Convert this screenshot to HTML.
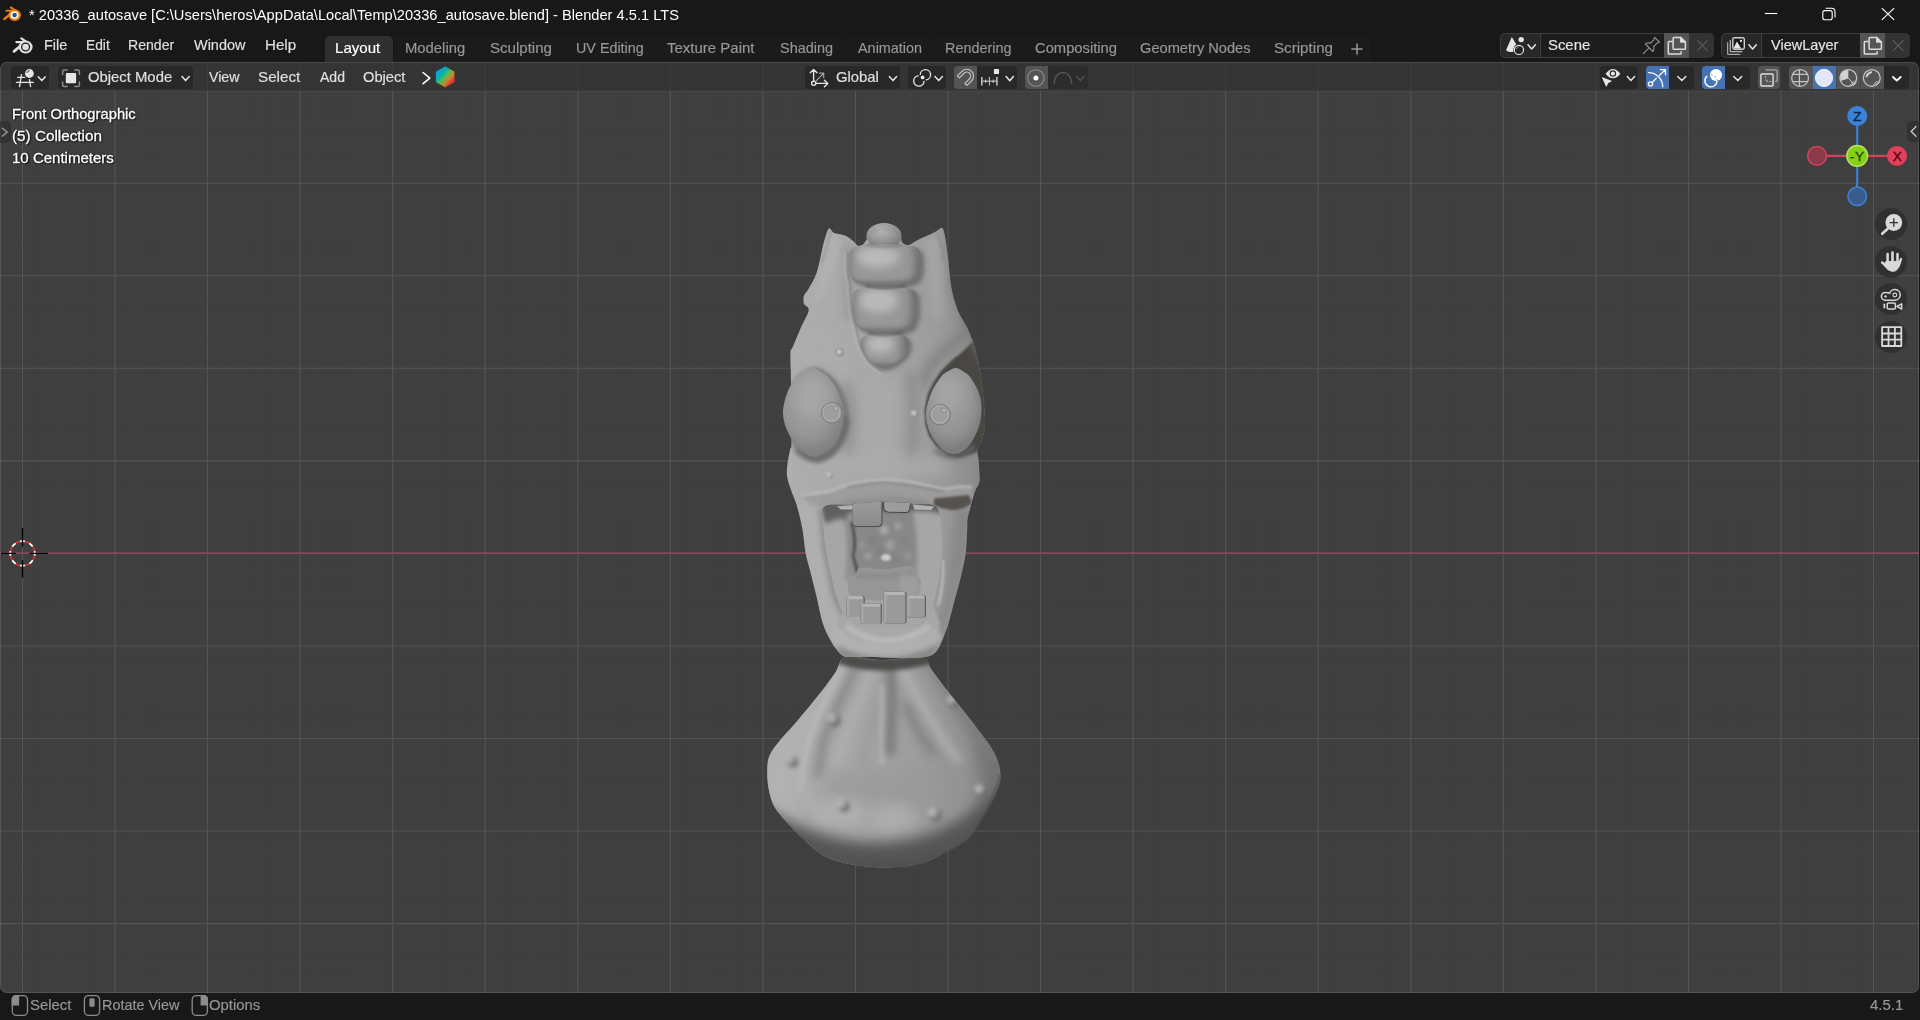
<!DOCTYPE html>
<html lang="en"><head><meta charset="utf-8"><title>Blender</title>
<style>
html,body{margin:0;padding:0;background:#181818;}
body{width:1920px;height:1020px;overflow:hidden;position:relative;font-family:"Liberation Sans",sans-serif;}
.a{position:absolute;}
.t{position:absolute;white-space:pre;line-height:20px;transform-origin:0 0;}
.btn{position:absolute;box-sizing:border-box;}
svg{position:absolute;overflow:visible;}
</style></head><body>

<div class="a" id="viewport" style="left:0px;top:62px;width:1919px;height:931px;background:#3f3f3f;border-radius:7px;overflow:hidden;">
<svg class="a" style="left:0;top:0" width="1919" height="931" viewBox="0 0 1919 931"><path d="M3.99 0V931M13.24 0V931M31.76 0V931M41.01 0V931M50.27 0V931M59.52 0V931M68.78 0V931M78.03 0V931M87.29 0V931M96.54 0V931M105.80 0V931M124.31 0V931M133.56 0V931M142.81 0V931M152.07 0V931M161.33 0V931M170.58 0V931M179.84 0V931M189.09 0V931M198.35 0V931M216.86 0V931M226.11 0V931M235.37 0V931M244.62 0V931M253.88 0V931M263.13 0V931M272.38 0V931M281.64 0V931M290.90 0V931M309.41 0V931M318.66 0V931M327.92 0V931M337.17 0V931M346.43 0V931M355.68 0V931M364.94 0V931M374.19 0V931M383.45 0V931M401.96 0V931M411.21 0V931M420.47 0V931M429.72 0V931M438.98 0V931M448.23 0V931M457.49 0V931M466.74 0V931M476.00 0V931M494.51 0V931M503.76 0V931M513.02 0V931M522.27 0V931M531.53 0V931M540.78 0V931M550.04 0V931M559.29 0V931M568.55 0V931M587.06 0V931M596.31 0V931M605.57 0V931M614.82 0V931M624.08 0V931M633.33 0V931M642.59 0V931M651.84 0V931M661.10 0V931M679.61 0V931M688.86 0V931M698.12 0V931M707.37 0V931M716.63 0V931M725.88 0V931M735.14 0V931M744.39 0V931M753.65 0V931M772.16 0V931M781.41 0V931M790.67 0V931M799.92 0V931M809.18 0V931M818.43 0V931M827.69 0V931M836.94 0V931M846.20 0V931M864.71 0V931M873.96 0V931M883.22 0V931M892.47 0V931M901.73 0V931M910.98 0V931M920.24 0V931M929.49 0V931M938.75 0V931M957.26 0V931M966.51 0V931M975.77 0V931M985.02 0V931M994.28 0V931M1003.53 0V931M1012.79 0V931M1022.04 0V931M1031.30 0V931M1049.81 0V931M1059.06 0V931M1068.32 0V931M1077.57 0V931M1086.83 0V931M1096.08 0V931M1105.34 0V931M1114.59 0V931M1123.85 0V931M1142.36 0V931M1151.61 0V931M1160.87 0V931M1170.12 0V931M1179.38 0V931M1188.63 0V931M1197.88 0V931M1207.14 0V931M1216.40 0V931M1234.91 0V931M1244.16 0V931M1253.42 0V931M1262.67 0V931M1271.93 0V931M1281.18 0V931M1290.44 0V931M1299.69 0V931M1308.95 0V931M1327.46 0V931M1336.71 0V931M1345.97 0V931M1355.22 0V931M1364.48 0V931M1373.73 0V931M1382.99 0V931M1392.24 0V931M1401.50 0V931M1420.01 0V931M1429.26 0V931M1438.52 0V931M1447.77 0V931M1457.03 0V931M1466.28 0V931M1475.54 0V931M1484.79 0V931M1494.05 0V931M1512.56 0V931M1521.81 0V931M1531.07 0V931M1540.32 0V931M1549.58 0V931M1558.83 0V931M1568.09 0V931M1577.34 0V931M1586.60 0V931M1605.11 0V931M1614.36 0V931M1623.62 0V931M1632.87 0V931M1642.13 0V931M1651.38 0V931M1660.64 0V931M1669.89 0V931M1679.15 0V931M1697.66 0V931M1706.91 0V931M1716.17 0V931M1725.42 0V931M1734.68 0V931M1743.93 0V931M1753.19 0V931M1762.44 0V931M1771.70 0V931M1790.21 0V931M1799.46 0V931M1808.72 0V931M1817.97 0V931M1827.23 0V931M1836.48 0V931M1845.74 0V931M1854.99 0V931M1864.25 0V931M1882.76 0V931M1892.01 0V931M1901.27 0V931M1910.52 0V931M0 0.88H1919M0 10.14H1919M0 19.39H1919M0 37.90H1919M0 47.16H1919M0 56.41H1919M0 65.67H1919M0 74.92H1919M0 84.18H1919M0 93.43H1919M0 102.69H1919M0 111.94H1919M0 130.45H1919M0 139.71H1919M0 148.96H1919M0 158.22H1919M0 167.47H1919M0 176.73H1919M0 185.98H1919M0 195.24H1919M0 204.49H1919M0 223.00H1919M0 232.26H1919M0 241.51H1919M0 250.77H1919M0 260.02H1919M0 269.28H1919M0 278.53H1919M0 287.79H1919M0 297.04H1919M0 315.55H1919M0 324.81H1919M0 334.06H1919M0 343.32H1919M0 352.57H1919M0 361.83H1919M0 371.08H1919M0 380.34H1919M0 389.59H1919M0 408.10H1919M0 417.36H1919M0 426.61H1919M0 435.87H1919M0 445.12H1919M0 454.38H1919M0 463.63H1919M0 472.89H1919M0 482.14H1919M0 500.65H1919M0 509.91H1919M0 519.16H1919M0 528.42H1919M0 537.67H1919M0 546.93H1919M0 556.18H1919M0 565.44H1919M0 574.69H1919M0 593.20H1919M0 602.46H1919M0 611.72H1919M0 620.97H1919M0 630.23H1919M0 639.48H1919M0 648.74H1919M0 657.99H1919M0 667.25H1919M0 685.75H1919M0 695.01H1919M0 704.26H1919M0 713.52H1919M0 722.77H1919M0 732.03H1919M0 741.28H1919M0 750.54H1919M0 759.80H1919M0 778.31H1919M0 787.56H1919M0 796.82H1919M0 806.07H1919M0 815.33H1919M0 824.58H1919M0 833.84H1919M0 843.09H1919M0 852.35H1919M0 870.86H1919M0 880.11H1919M0 889.37H1919M0 898.62H1919M0 907.88H1919M0 917.13H1919M0 926.38H1919" stroke="#434343" stroke-width="0.9" fill="none"/><path d="M22.50 0V931M115.05 0V931M207.60 0V931M300.15 0V931M392.70 0V931M485.25 0V931M577.80 0V931M670.35 0V931M762.90 0V931M855.45 0V931M948.00 0V931M1040.55 0V931M1133.10 0V931M1225.65 0V931M1318.20 0V931M1410.75 0V931M1503.30 0V931M1595.85 0V931M1688.40 0V931M1780.95 0V931M1873.50 0V931M0 28.65H1919M0 121.20H1919M0 213.75H1919M0 306.30H1919M0 398.85H1919M0 583.95H1919M0 676.50H1919M0 769.05H1919M0 861.60H1919" stroke="#555555" stroke-width="1.1" fill="none"/><path d="M0 491.15H1919" stroke="#874859" stroke-width="1.75" fill="none"/></svg>
<svg class="a" style="left:0;top:0" width="1919" height="931" viewBox="0 62 1919 931"><defs>
<filter id="b2" filterUnits="userSpaceOnUse" x="730" y="200" width="300" height="700"><feGaussianBlur stdDeviation="2"/></filter>
<filter id="b4" filterUnits="userSpaceOnUse" x="730" y="200" width="300" height="700"><feGaussianBlur stdDeviation="4"/></filter>
<filter id="b7" filterUnits="userSpaceOnUse" x="730" y="200" width="300" height="700"><feGaussianBlur stdDeviation="7"/></filter>
<filter id="b12" filterUnits="userSpaceOnUse" x="730" y="200" width="300" height="700"><feGaussianBlur stdDeviation="12"/></filter>
<filter id="b1" filterUnits="userSpaceOnUse" x="730" y="200" width="300" height="700"><feGaussianBlur stdDeviation="1"/></filter>
<linearGradient id="gHead" x1="0" y1="0" x2="1" y2="0"><stop offset="0" stop-color="#aeaeae"/><stop offset="0.45" stop-color="#a8a8a8"/><stop offset="0.8" stop-color="#999999"/><stop offset="1" stop-color="#878787"/></linearGradient>
<linearGradient id="gBody" x1="0" y1="0" x2="1" y2="0"><stop offset="0" stop-color="#b0b0b0"/><stop offset="0.5" stop-color="#a3a3a3"/><stop offset="0.85" stop-color="#929292"/><stop offset="1" stop-color="#7c7c7c"/></linearGradient>
<radialGradient id="gEyeL" cx="0.42" cy="0.34" r="0.75"><stop offset="0" stop-color="#a6a6a6"/><stop offset="0.55" stop-color="#969696"/><stop offset="1" stop-color="#7a7a7a"/></radialGradient>
<radialGradient id="gEyeR" cx="0.42" cy="0.34" r="0.75"><stop offset="0" stop-color="#a4a4a4"/><stop offset="0.55" stop-color="#949494"/><stop offset="1" stop-color="#767676"/></radialGradient>
<radialGradient id="gSeg" cx="0.42" cy="0.3" r="0.8"><stop offset="0" stop-color="#b4b4b4"/><stop offset="0.45" stop-color="#999999"/><stop offset="1" stop-color="#6e6e6e"/></radialGradient>
<linearGradient id="gTooth" x1="0" y1="0" x2="0" y2="1"><stop offset="0" stop-color="#9a9a9a"/><stop offset="1" stop-color="#8a8a8a"/></linearGradient>
<clipPath id="cHead"><path d="M829.2 228.2C830.5 227.8 831.9 231.7 833.7 232.7C835.5 233.7 837.9 233.8 839.9 234.3C841.9 234.9 843.8 234.9 846.0 236.0C848.2 237.1 851.2 239.4 853.1 241.0C855.0 242.6 856.2 244.9 857.6 245.6C859.0 246.3 860.1 246.1 861.5 245.3C862.9 244.5 864.5 243.1 866.0 240.7C867.5 238.3 868.8 233.6 870.5 231.0C872.2 228.4 874.2 226.5 876.5 225.2C878.8 223.9 881.6 223.2 884.0 223.2C886.4 223.2 888.8 223.9 891.0 225.0C893.2 226.1 895.6 228.0 897.2 230.0C898.8 232.0 900.0 235.0 900.8 237.0C901.6 239.0 901.1 240.7 902.0 242.0C902.9 243.3 905.0 244.6 906.3 245.0C907.6 245.4 908.4 245.3 910.0 244.6C911.6 243.9 913.7 242.2 916.0 241.0C918.3 239.8 920.9 238.5 924.0 237.1C927.1 235.7 931.6 233.9 934.6 232.3C937.6 230.8 940.1 227.9 941.7 227.8C943.3 227.8 943.4 230.0 944.0 232.0C944.6 234.0 944.9 235.0 945.6 240.0C946.3 245.0 947.4 253.7 948.4 261.8C949.4 269.9 949.9 280.4 951.5 288.5C953.1 296.6 955.2 303.9 957.8 310.4C960.4 316.9 964.6 322.2 967.2 327.7C969.8 333.2 971.9 338.8 973.5 343.4C975.1 347.9 975.7 351.3 976.6 355.0C977.5 358.7 978.1 360.7 979.0 365.7C979.9 370.7 981.2 378.4 982.0 385.0C982.8 391.6 983.5 398.3 984.0 405.0C984.5 411.7 985.3 419.2 985.0 425.0C984.7 430.8 983.2 435.9 982.0 440.0C980.8 444.1 978.1 446.3 977.5 449.5C976.9 452.7 978.1 454.8 978.5 459.0C978.9 463.2 979.5 470.9 979.6 475.0C979.7 479.1 979.8 480.7 979.0 483.4C978.2 486.1 976.4 487.3 975.0 491.2C973.6 495.1 971.7 502.2 970.4 507.0C969.1 511.8 967.9 516.3 967.4 520.0C966.9 523.7 967.5 523.7 967.2 529.2C966.9 534.7 966.7 544.9 965.7 552.8C964.7 560.6 962.8 568.5 961.0 576.3C959.2 584.1 956.8 591.9 954.7 599.8C952.6 607.6 950.5 616.6 948.4 623.4C946.3 630.2 943.9 636.2 942.1 640.6C940.3 645.0 939.2 647.5 937.4 650.0C935.5 652.5 933.9 654.2 931.0 655.5C928.1 656.8 925.2 657.1 920.0 657.5C914.8 657.9 907.3 657.9 900.0 657.8C892.7 657.7 883.5 657.1 876.0 657.0C868.5 656.9 860.5 657.2 855.0 657.0C849.5 656.8 846.3 657.1 843.3 655.9C840.3 654.7 839.1 652.5 837.0 650.0C834.9 647.5 833.1 645.0 830.7 640.6C828.4 636.2 825.2 630.7 822.9 623.4C820.5 616.1 818.7 605.3 816.6 596.7C814.5 588.1 812.1 578.9 810.3 571.6C808.5 564.3 806.9 559.9 805.6 552.8C804.3 545.7 803.9 537.0 802.5 529.2C801.1 521.4 798.9 512.5 797.0 506.0C795.1 499.5 792.7 495.0 791.0 490.0C789.3 485.0 787.6 480.5 787.0 476.0C786.4 471.5 787.1 467.3 787.6 463.0C788.1 458.7 789.4 453.2 790.0 450.0C790.6 446.8 791.3 450.3 791.5 444.0C791.7 437.7 791.1 422.5 791.0 412.0C790.9 401.5 791.0 388.2 791.0 381.0C791.0 373.8 790.8 373.6 790.7 368.8C790.6 364.0 790.1 355.7 790.5 352.0C790.9 348.3 791.3 350.6 793.0 346.5C794.7 342.4 798.3 333.7 800.9 327.7C803.5 321.7 808.1 314.3 808.7 310.4C809.3 306.5 805.2 306.4 804.3 304.5C803.4 302.6 803.5 300.7 803.5 299.0C803.5 297.3 803.6 296.2 804.5 294.5C805.4 292.8 806.7 292.1 808.7 288.5C810.7 284.9 814.2 279.9 816.6 272.8C819.0 265.7 821.3 252.3 822.9 246.0C824.5 239.7 825.0 238.0 826.0 235.0C827.0 232.0 827.9 228.6 829.2 228.2Z"/></clipPath><clipPath id="cBody"><path d="M846.0 657.0C853.4 654.9 867.3 659.9 880.0 660.0C892.7 660.1 913.5 656.0 922.0 657.5C930.5 659.0 927.1 663.9 931.0 669.0C934.9 674.1 940.8 682.2 945.3 688.0C949.8 693.8 953.6 698.5 957.8 703.7C962.0 708.9 966.7 714.7 970.4 719.4C974.1 724.1 976.7 727.8 979.8 732.0C982.9 736.2 986.3 740.0 989.2 744.5C992.1 749.0 995.2 754.2 997.0 758.7C998.8 763.2 999.8 767.2 1000.2 771.2C1000.6 775.2 1000.7 778.7 999.6 783.0C998.5 787.3 996.9 791.2 993.9 797.0C990.9 802.8 985.8 810.7 981.4 817.5C977.0 824.3 973.0 832.4 967.2 837.9C961.4 843.4 952.8 846.8 946.8 850.4C940.8 854.0 937.5 857.2 931.0 859.8C924.5 862.4 916.7 864.8 907.6 866.0C898.5 867.2 886.7 867.7 876.2 867.2C865.7 866.7 853.7 865.0 844.8 863.0C835.9 861.0 829.7 858.9 822.9 855.0C816.1 851.1 810.0 844.9 804.0 839.4C798.0 833.9 791.8 827.7 786.8 822.2C781.8 816.7 777.2 812.0 774.2 806.5C771.2 801.0 769.9 795.1 768.7 789.2C767.5 783.3 767.1 776.8 767.2 771.2C767.3 765.6 767.3 760.7 769.5 755.5C771.7 750.3 776.3 745.0 780.5 739.8C784.7 734.5 789.6 729.8 794.6 724.0C799.6 718.2 805.6 711.0 810.3 705.3C815.0 699.6 818.7 695.1 822.9 689.6C827.1 684.1 831.5 677.8 835.4 672.4C839.2 667.0 838.6 659.1 846.0 657.0Z"/></clipPath><clipPath id="cMouth"><path d="M823.8 506.9C828.2 503.0 840.2 505.4 850.0 504.5C859.8 503.6 872.5 501.6 882.8 501.4C893.1 501.2 903.1 502.6 912.0 503.5C920.9 504.4 931.1 502.1 936.0 506.5C940.9 510.9 940.4 522.8 941.5 530.0C942.6 537.2 942.4 544.7 942.4 550.0C942.4 555.3 942.0 555.9 941.2 561.8C940.4 567.7 939.2 577.5 937.6 585.3C936.0 593.1 934.5 602.5 931.8 608.8C929.1 615.1 926.9 619.8 921.2 622.9C915.5 626.0 905.5 626.6 897.6 627.6C889.8 628.6 881.6 629.4 874.1 628.8C866.6 628.2 858.0 626.6 852.9 624.1C847.8 621.6 846.2 618.0 843.5 613.5C840.8 609.0 838.6 603.7 836.5 597.0C834.4 590.3 832.4 581.3 830.6 573.5C828.8 565.7 827.1 557.6 825.9 550.0C824.7 542.4 823.9 535.2 823.5 528.0C823.1 520.8 819.4 510.8 823.8 506.9Z"/></clipPath></defs><path d="M846.0 657.0C853.4 654.9 867.3 659.9 880.0 660.0C892.7 660.1 913.5 656.0 922.0 657.5C930.5 659.0 927.1 663.9 931.0 669.0C934.9 674.1 940.8 682.2 945.3 688.0C949.8 693.8 953.6 698.5 957.8 703.7C962.0 708.9 966.7 714.7 970.4 719.4C974.1 724.1 976.7 727.8 979.8 732.0C982.9 736.2 986.3 740.0 989.2 744.5C992.1 749.0 995.2 754.2 997.0 758.7C998.8 763.2 999.8 767.2 1000.2 771.2C1000.6 775.2 1000.7 778.7 999.6 783.0C998.5 787.3 996.9 791.2 993.9 797.0C990.9 802.8 985.8 810.7 981.4 817.5C977.0 824.3 973.0 832.4 967.2 837.9C961.4 843.4 952.8 846.8 946.8 850.4C940.8 854.0 937.5 857.2 931.0 859.8C924.5 862.4 916.7 864.8 907.6 866.0C898.5 867.2 886.7 867.7 876.2 867.2C865.7 866.7 853.7 865.0 844.8 863.0C835.9 861.0 829.7 858.9 822.9 855.0C816.1 851.1 810.0 844.9 804.0 839.4C798.0 833.9 791.8 827.7 786.8 822.2C781.8 816.7 777.2 812.0 774.2 806.5C771.2 801.0 769.9 795.1 768.7 789.2C767.5 783.3 767.1 776.8 767.2 771.2C767.3 765.6 767.3 760.7 769.5 755.5C771.7 750.3 776.3 745.0 780.5 739.8C784.7 734.5 789.6 729.8 794.6 724.0C799.6 718.2 805.6 711.0 810.3 705.3C815.0 699.6 818.7 695.1 822.9 689.6C827.1 684.1 831.5 677.8 835.4 672.4C839.2 667.0 838.6 659.1 846.0 657.0Z" fill="url(#gBody)"/><g clip-path="url(#cBody)"><path d="M935 660 L1010 750 L1010 840 L950 880 L985 790 L975 740 Z" fill="#707070" filter="url(#b7)" opacity="0.75"/><path d="M846 658 L812 700 L770 752 L764 790 L790 830 L800 780 L812 736 L840 690 L856 664Z" fill="#b4b4b4" filter="url(#b7)" opacity="0.7"/><path d="M844.8 661.4 L816.6 717.9 L804 760 L800 790" stroke="#bababa" stroke-width="5" fill="none" filter="url(#b2)" opacity="0.8" stroke-linecap="round"/><path d="M855 668 L838 705 L823 742 L818 775" stroke="#808080" stroke-width="7" fill="none" filter="url(#b4)" opacity="0.9" stroke-linecap="round"/><path d="M873 668 L858 705 L845 740 L837 765" stroke="#b4b4b4" stroke-width="6" fill="none" filter="url(#b4)" opacity="0.8" stroke-linecap="round"/><path d="M878 700 L868 740 L862 765" stroke="#8e8e8e" stroke-width="5" fill="none" filter="url(#b4)" opacity="0.6" stroke-linecap="round"/><path d="M883 686 L882.5 730 L882.5 763" stroke="#bcbcbc" stroke-width="4.5" fill="none" filter="url(#b2)" opacity="0.85" stroke-linecap="round"/><path d="M890 662 L892 700 L890 752" stroke="#727272" stroke-width="9" fill="none" filter="url(#b4)" opacity="0.9" stroke-linecap="round"/><path d="M902 668 L922 705 L942 738 L958 760" stroke="#b6b6b6" stroke-width="8" fill="none" filter="url(#b4)" opacity="0.8" stroke-linecap="round"/><path d="M906 706 L918 732 L932 752" stroke="#7c7c7c" stroke-width="7" fill="none" filter="url(#b4)" opacity="0.85" stroke-linecap="round"/><path d="M928 664 L960 712 L992 758" stroke="#808080" stroke-width="9" fill="none" filter="url(#b4)" opacity="0.7" stroke-linecap="round"/><ellipse cx="882" cy="788" rx="62" ry="20" fill="#9a9a9a" filter="url(#b7)" opacity="0.7"/><ellipse cx="842" cy="812" rx="26" ry="13" fill="#b2b2b2" filter="url(#b7)" opacity="0.8"/><ellipse cx="893" cy="818" rx="24" ry="14" fill="#b0b0b0" filter="url(#b7)" opacity="0.8"/><path d="M800 770 Q802 800 830 830" stroke="#b4b4b4" stroke-width="6" fill="none" filter="url(#b4)" opacity="0.6"/><path d="M760 806 Q830 846 884 842 Q950 840 1005 784 L1010 885 L760 885Z" fill="#545454" filter="url(#b7)"/><path d="M830 864 Q885 872 940 858 L960 880 L820 880Z" fill="#4a4a4a" filter="url(#b4)" opacity="0.8"/><path d="M838 650 Q884 666 932 650 L934 663 Q884 678 838 664Z" fill="#484644" filter="url(#b2)" opacity="0.95"/><circle cx="792.9" cy="762.2" r="5.4" fill="#6c6c6c" filter="url(#b2)" opacity="0.8"/><circle cx="789.5" cy="759" r="4.59" fill="#bcbcbc" filter="url(#b2)" opacity="0.8"/><circle cx="935.9" cy="815.7" r="6" fill="#6c6c6c" filter="url(#b2)" opacity="0.8"/><circle cx="932.5" cy="812.5" r="5.1" fill="#bcbcbc" filter="url(#b2)" opacity="0.8"/><circle cx="844.4" cy="806.7" r="5.6" fill="#6c6c6c" filter="url(#b2)" opacity="0.8"/><circle cx="841" cy="803.5" r="4.76" fill="#bcbcbc" filter="url(#b2)" opacity="0.8"/><circle cx="834.9" cy="721.0" r="6" fill="#6c6c6c" filter="url(#b2)" opacity="0.8"/><circle cx="831.5" cy="717.8" r="5.1" fill="#bcbcbc" filter="url(#b2)" opacity="0.8"/><circle cx="954.4" cy="703.0" r="5" fill="#6c6c6c" filter="url(#b2)" opacity="0.8"/><circle cx="951" cy="699.8" r="4.25" fill="#bcbcbc" filter="url(#b2)" opacity="0.8"/><circle cx="982.4" cy="792.2" r="5.6" fill="#6c6c6c" filter="url(#b2)" opacity="0.8"/><circle cx="979" cy="789" r="4.76" fill="#bcbcbc" filter="url(#b2)" opacity="0.8"/></g><path d="M1000 775 Q996 800 968 838 Q945 855 905 866.5" stroke="#55524f" stroke-width="2.2" fill="none" filter="url(#b1)" opacity="0.9"/><path d="M829.2 228.2C830.5 227.8 831.9 231.7 833.7 232.7C835.5 233.7 837.9 233.8 839.9 234.3C841.9 234.9 843.8 234.9 846.0 236.0C848.2 237.1 851.2 239.4 853.1 241.0C855.0 242.6 856.2 244.9 857.6 245.6C859.0 246.3 860.1 246.1 861.5 245.3C862.9 244.5 864.5 243.1 866.0 240.7C867.5 238.3 868.8 233.6 870.5 231.0C872.2 228.4 874.2 226.5 876.5 225.2C878.8 223.9 881.6 223.2 884.0 223.2C886.4 223.2 888.8 223.9 891.0 225.0C893.2 226.1 895.6 228.0 897.2 230.0C898.8 232.0 900.0 235.0 900.8 237.0C901.6 239.0 901.1 240.7 902.0 242.0C902.9 243.3 905.0 244.6 906.3 245.0C907.6 245.4 908.4 245.3 910.0 244.6C911.6 243.9 913.7 242.2 916.0 241.0C918.3 239.8 920.9 238.5 924.0 237.1C927.1 235.7 931.6 233.9 934.6 232.3C937.6 230.8 940.1 227.9 941.7 227.8C943.3 227.8 943.4 230.0 944.0 232.0C944.6 234.0 944.9 235.0 945.6 240.0C946.3 245.0 947.4 253.7 948.4 261.8C949.4 269.9 949.9 280.4 951.5 288.5C953.1 296.6 955.2 303.9 957.8 310.4C960.4 316.9 964.6 322.2 967.2 327.7C969.8 333.2 971.9 338.8 973.5 343.4C975.1 347.9 975.7 351.3 976.6 355.0C977.5 358.7 978.1 360.7 979.0 365.7C979.9 370.7 981.2 378.4 982.0 385.0C982.8 391.6 983.5 398.3 984.0 405.0C984.5 411.7 985.3 419.2 985.0 425.0C984.7 430.8 983.2 435.9 982.0 440.0C980.8 444.1 978.1 446.3 977.5 449.5C976.9 452.7 978.1 454.8 978.5 459.0C978.9 463.2 979.5 470.9 979.6 475.0C979.7 479.1 979.8 480.7 979.0 483.4C978.2 486.1 976.4 487.3 975.0 491.2C973.6 495.1 971.7 502.2 970.4 507.0C969.1 511.8 967.9 516.3 967.4 520.0C966.9 523.7 967.5 523.7 967.2 529.2C966.9 534.7 966.7 544.9 965.7 552.8C964.7 560.6 962.8 568.5 961.0 576.3C959.2 584.1 956.8 591.9 954.7 599.8C952.6 607.6 950.5 616.6 948.4 623.4C946.3 630.2 943.9 636.2 942.1 640.6C940.3 645.0 939.2 647.5 937.4 650.0C935.5 652.5 933.9 654.2 931.0 655.5C928.1 656.8 925.2 657.1 920.0 657.5C914.8 657.9 907.3 657.9 900.0 657.8C892.7 657.7 883.5 657.1 876.0 657.0C868.5 656.9 860.5 657.2 855.0 657.0C849.5 656.8 846.3 657.1 843.3 655.9C840.3 654.7 839.1 652.5 837.0 650.0C834.9 647.5 833.1 645.0 830.7 640.6C828.4 636.2 825.2 630.7 822.9 623.4C820.5 616.1 818.7 605.3 816.6 596.7C814.5 588.1 812.1 578.9 810.3 571.6C808.5 564.3 806.9 559.9 805.6 552.8C804.3 545.7 803.9 537.0 802.5 529.2C801.1 521.4 798.9 512.5 797.0 506.0C795.1 499.5 792.7 495.0 791.0 490.0C789.3 485.0 787.6 480.5 787.0 476.0C786.4 471.5 787.1 467.3 787.6 463.0C788.1 458.7 789.4 453.2 790.0 450.0C790.6 446.8 791.3 450.3 791.5 444.0C791.7 437.7 791.1 422.5 791.0 412.0C790.9 401.5 791.0 388.2 791.0 381.0C791.0 373.8 790.8 373.6 790.7 368.8C790.6 364.0 790.1 355.7 790.5 352.0C790.9 348.3 791.3 350.6 793.0 346.5C794.7 342.4 798.3 333.7 800.9 327.7C803.5 321.7 808.1 314.3 808.7 310.4C809.3 306.5 805.2 306.4 804.3 304.5C803.4 302.6 803.5 300.7 803.5 299.0C803.5 297.3 803.6 296.2 804.5 294.5C805.4 292.8 806.7 292.1 808.7 288.5C810.7 284.9 814.2 279.9 816.6 272.8C819.0 265.7 821.3 252.3 822.9 246.0C824.5 239.7 825.0 238.0 826.0 235.0C827.0 232.0 827.9 228.6 829.2 228.2Z" fill="url(#gHead)"/><g clip-path="url(#cHead)"><path d="M973 341 L962.7 351.4 L951 360.8 L940.8 371 L932.9 382.7 L927.5 394.5 L924.5 410 L925.5 425 L929 436 L937 447 L948 456 L958 458 L975 453 L990 440 L992 400 L990 360 L985 340Z" fill="#4a4643" filter="url(#b1)"/><path d="M975 330 L960 346 L946 358 L934 372 L926 390 L918 380 L930 356 L950 338 L968 322Z" fill="#828282" filter="url(#b4)" opacity="0.8"/><path d="M944 228 L950 290 L960 320 L985 370 L990 228Z" fill="#7a7876" filter="url(#b4)" opacity="0.7"/><path d="M792 350 Q800 362 830 366 Q850 372 858 400 L850 360 L830 330 L800 330Z" fill="#adadad" filter="url(#b4)" opacity="0.7"/><path d="M868 380 Q875 430 858 470 L900 470 Q892 420 900 380Z" fill="#ababab" filter="url(#b7)" opacity="0.8"/><path d="M850 380 Q862 420 850 460 L842 455 Q852 420 842 385Z" fill="#8a8a8a" filter="url(#b4)" opacity="0.7"/><path d="M905 372 Q912 420 905 462 L915 462 Q922 420 915 372Z" fill="#888888" filter="url(#b4)" opacity="0.7"/><path d="M830 232 Q822 270 812 300 L822 300 Q836 268 842 240Z" fill="#b2b2b2" filter="url(#b2)" opacity="0.7"/><path d="M846 242 Q842 280 846 320 L856 320 Q850 280 854 246Z" fill="#8c8c8c" filter="url(#b4)" opacity="0.6"/><path d="M925 238 Q930 280 932 320 L942 320 Q944 270 940 232Z" fill="#aaaaaa" filter="url(#b4)" opacity="0.6"/><path d="M831 231 Q828 245 822 262" stroke="#8a8a8a" stroke-width="1.2" fill="none" filter="url(#b1)" opacity="0.7"/><path d="M937 232 Q942 246 944.5 262" stroke="#7a7a7a" stroke-width="1.2" fill="none" filter="url(#b1)" opacity="0.7"/><ellipse cx="880" cy="466" rx="72" ry="13" fill="#acacac" filter="url(#b7)" opacity="0.75"/><path d="M800.0 497.0C801.2 496.8 802.4 496.6 807.3 495.9C812.2 495.2 822.5 494.3 829.2 492.7C836.0 491.1 841.4 487.8 847.8 486.1C854.2 484.4 861.5 483.1 867.5 482.3C873.5 481.5 877.5 481.1 883.9 481.2C890.3 481.3 898.5 481.8 905.8 482.8C913.1 483.8 921.3 485.9 927.7 487.2C934.1 488.5 938.5 490.3 944.0 490.5C949.5 490.7 955.8 488.6 960.5 488.3C965.2 488.1 970.1 488.9 972.0 489.0 L975 512 L940 509 L882.8 501.4 L823.8 506.9 L810 506 L804 498Z" fill="#9c9c9c" filter="url(#b1)" opacity="0.9"/><path d="M850 500 Q884 494 925 500 L936 508 L882.8 502 L823.8 508Z" fill="#8a8a8a" filter="url(#b2)" opacity="0.8"/><path d="M800.0 497.0C801.2 496.8 802.4 496.6 807.3 495.9C812.2 495.2 822.5 494.3 829.2 492.7C836.0 491.1 841.4 487.8 847.8 486.1C854.2 484.4 861.5 483.1 867.5 482.3C873.5 481.5 877.5 481.1 883.9 481.2C890.3 481.3 898.5 481.8 905.8 482.8C913.1 483.8 921.3 485.9 927.7 487.2C934.1 488.5 938.5 490.3 944.0 490.5C949.5 490.7 955.8 488.6 960.5 488.3C965.2 488.1 970.1 488.9 972.0 489.0" stroke="#b6b6b6" stroke-width="3.2" fill="none" filter="url(#b1)" opacity="0.9" transform="translate(0 -1.6)"/><path d="M847.8 487.4 Q867.5 483.6 883.9 482.5 Q905.8 484 927.7 488.4 L944 491.6" stroke="#7e7e7e" stroke-width="1.1" fill="none" filter="url(#b1)" opacity="0.9"/><path d="M794 500 L806 556 L822 622 L842 656 L852 650 L834 604 L822 540 L818 505Z" fill="#b0b0b0" filter="url(#b4)" opacity="0.75"/><path d="M818 508 L822 550 L832 598 L846 624 L852 620 L838 590 L828 540 L826 508Z" fill="#888888" filter="url(#b2)" opacity="0.75"/><path d="M972 500 L966 556 L952 612 L934 652 L926 648 L944 600 L952 540 L956 505Z" fill="#858585" filter="url(#b4)" opacity="0.75"/><path d="M943 560 Q944 585 938 606" stroke="#bcbcbc" stroke-width="2.6" fill="none" filter="url(#b1)" opacity="0.9"/><path d="M934 498.5 Q950 496.5 969 495 L972 503 Q962 511 950 509.8 Q940 508.6 934 505Z" fill="#55504b" filter="url(#b1)" opacity="0.95"/><path d="M834 616 Q850 640 885 642 Q922 640 936 616 L942 640 Q920 660 885 660 Q850 660 830 640Z" fill="#b2b2b2" filter="url(#b2)" opacity="0.9"/><path d="M838 646 Q860 656 885 657 Q912 656 934 646 L934 660 L838 660Z" fill="#868686" filter="url(#b2)" opacity="0.8"/></g><path d="M823.8 506.9C828.2 503.0 840.2 505.4 850.0 504.5C859.8 503.6 872.5 501.6 882.8 501.4C893.1 501.2 903.1 502.6 912.0 503.5C920.9 504.4 931.1 502.1 936.0 506.5C940.9 510.9 940.4 522.8 941.5 530.0C942.6 537.2 942.4 544.7 942.4 550.0C942.4 555.3 942.0 555.9 941.2 561.8C940.4 567.7 939.2 577.5 937.6 585.3C936.0 593.1 934.5 602.5 931.8 608.8C929.1 615.1 926.9 619.8 921.2 622.9C915.5 626.0 905.5 626.6 897.6 627.6C889.8 628.6 881.6 629.4 874.1 628.8C866.6 628.2 858.0 626.6 852.9 624.1C847.8 621.6 846.2 618.0 843.5 613.5C840.8 609.0 838.6 603.7 836.5 597.0C834.4 590.3 832.4 581.3 830.6 573.5C828.8 565.7 827.1 557.6 825.9 550.0C824.7 542.4 823.9 535.2 823.5 528.0C823.1 520.8 819.4 510.8 823.8 506.9Z" fill="#a6a6a6"/><g clip-path="url(#cMouth)"><path d="M856 512 L912 508 Q920 540 916 578 L852 580 Q850 545 850 515Z" fill="#888888" filter="url(#b2)"/><circle cx="884" cy="530" r="4.5" fill="#b2b2b2" filter="url(#b2)" opacity="0.8"/><circle cx="898" cy="526" r="3.5" fill="#acacac" filter="url(#b2)" opacity="0.8"/><circle cx="873" cy="540" r="3.5" fill="#7c7c7c" filter="url(#b2)" opacity="0.8"/><circle cx="890" cy="545" r="4.5" fill="#a8a8a8" filter="url(#b2)" opacity="0.8"/><circle cx="903" cy="540" r="3.5" fill="#808080" filter="url(#b2)" opacity="0.8"/><circle cx="868" cy="556" r="3.5" fill="#a8a8a8" filter="url(#b2)" opacity="0.8"/><circle cx="880" cy="552" r="3" fill="#787878" filter="url(#b2)" opacity="0.8"/><circle cx="908" cy="556" r="3.5" fill="#9c9c9c" filter="url(#b2)" opacity="0.8"/><circle cx="876" cy="522" r="3.5" fill="#828282" filter="url(#b2)" opacity="0.8"/><circle cx="896" cy="560" r="3" fill="#7e7e7e" filter="url(#b2)" opacity="0.8"/><circle cx="862" cy="545" r="3" fill="#9e9e9e" filter="url(#b2)" opacity="0.8"/><ellipse cx="886" cy="557.5" rx="5" ry="3.6" fill="#d2d2d2" filter="url(#b1)" opacity="0.9"/><path d="M851 522 Q857 540 853 556 Q856 566 858 574" stroke="#4c4c4c" stroke-width="3" fill="none" filter="url(#b1)" opacity="0.9"/><path d="M846 515 Q852 545 848 580" stroke="#7a7a7a" stroke-width="4" fill="none" filter="url(#b2)" opacity="0.7"/><path d="M820 502 L940 502 L942 514 Q930 510 912 511 L854 512 Q835 513 826 522Z" fill="#5a5a5a" filter="url(#b2)" opacity="0.95"/><path d="M824 506 L850 508 L846 520 Q835 518 826 524Z" fill="#606060" filter="url(#b2)" opacity="0.8"/><path d="M855.3 574.7C857.1 573.1 856.1 568.5 861.2 567.6C866.3 566.7 877.5 569.4 885.9 569.2C894.3 569.0 906.9 565.6 911.8 566.5C916.7 567.4 913.8 572.6 915.3 574.7C916.8 576.9 919.8 577.0 920.6 579.4C921.4 581.8 920.7 586.0 920.0 588.8C919.3 591.6 919.8 594.1 916.5 596.0C913.2 597.9 907.8 599.3 900.0 600.0C892.2 600.7 878.2 600.7 870.0 600.0C861.8 599.3 854.2 598.8 850.6 596.0C847.0 593.2 848.2 586.2 848.2 583.0C848.2 579.8 849.4 578.4 850.6 577.0C851.8 575.6 853.5 576.3 855.3 574.7Z" fill="#969696"/><path d="M858 572 Q885 576 912 570 L914 576 Q885 582 856 578Z" fill="#8a8a8a" filter="url(#b1)" opacity="0.7"/><path d="M900 572 L918 578 L918 596 L900 598Z" fill="#a2a2a2" filter="url(#b2)" opacity="0.7"/></g><path d="M836.9 506.3 L853.3 505 L853.3 509.6 L841 509.4Z" fill="#b2b2b2"/><path d="M912.9 504.6 L934.2 506.4 L931 510 L914.5 509.4Z" fill="#b2b2b2"/><path d="M852.7 503.5 L882.3 501.6 V523 Q882.3 526.6 878.6 526.8 L857 527.1 Q853 526.8 852.7 523Z" fill="#3e3e3e"/><path d="M852.7 503.5 L881.5 501.6 V522.4 Q881.5 525.8 878 526 L857 526.3 Q853 526 852.7 522.4Z" fill="url(#gTooth)"/><path d="M883.4 501.5 L910.7 503 L909.6 510.6 Q909 512.9 906 512.9 L888 512.5 Q884.4 512 883.6 509Z" fill="#3e3e3e"/><path d="M884 501.6 L910.2 503 L909 510 Q908.4 512.1 905.6 512.1 L888.4 511.8 Q885 511.4 884.3 508.6Z" fill="#9c9c9c"/><rect x="846.5" y="595.9" width="18.2" height="21.1" rx="2.2" fill="#555"/><rect x="846.5" y="595.9" width="17.2" height="21.1" rx="2.2" fill="#9a9a9a"/><rect x="846.9" y="596.1999999999999" width="16.2" height="3" rx="1.4" fill="#b6b6b6" opacity="0.95"/><rect x="846.8" y="596.9" width="2.6" height="19.1" rx="1.2" fill="#ababab" opacity="0.7"/><rect x="883.5" y="591.8" width="23.0" height="31.7" rx="2.2" fill="#555"/><rect x="883.5" y="591.8" width="22.0" height="31.7" rx="2.2" fill="#9a9a9a"/><rect x="883.9" y="592.0999999999999" width="21.0" height="3" rx="1.4" fill="#b6b6b6" opacity="0.95"/><rect x="883.8" y="592.8" width="2.6" height="29.7" rx="1.2" fill="#ababab" opacity="0.7"/><rect x="907" y="595.3" width="18.9" height="22.2" rx="2.2" fill="#555"/><rect x="907" y="595.3" width="17.9" height="22.2" rx="2.2" fill="#9a9a9a"/><rect x="907.4" y="595.5999999999999" width="16.9" height="3" rx="1.4" fill="#b6b6b6" opacity="0.95"/><rect x="907.3" y="596.3" width="2.6" height="20.2" rx="1.2" fill="#ababab" opacity="0.7"/><rect x="860.6" y="603.5" width="21.2" height="20.5" rx="2.2" fill="#555"/><rect x="860.6" y="603.5" width="20.2" height="20.5" rx="2.2" fill="#9a9a9a"/><rect x="861.0" y="603.8" width="19.2" height="3" rx="1.4" fill="#b6b6b6" opacity="0.95"/><rect x="860.9" y="604.5" width="2.6" height="18.5" rx="1.2" fill="#ababab" opacity="0.7"/><g clip-path="url(#cHead)"><path d="M843 612 Q852 626 874 630 Q898 629 921 624 Q930 616 933 606 L940 624 Q920 644 885 645 Q850 644 836 624Z" fill="#a8a8a8" filter="url(#b1)"/><path d="M846 626 Q866 640 886 641 Q910 640 930 626" stroke="#bebebe" stroke-width="6" fill="none" filter="url(#b2)" opacity="0.9"/></g><ellipse cx="884" cy="236" rx="17.6" ry="13" fill="url(#gSeg)"/><path d="M870 233 Q884 226.5 897 232" stroke="#8c8c8c" stroke-width="1.2" fill="none" filter="url(#b1)" opacity="0.7"/><g clip-path="url(#cHead)"><path d="M849.0 262.0C849.1 257.8 848.8 252.8 851.0 250.0C853.2 247.2 856.3 246.4 862.0 245.5C867.7 244.6 877.3 244.5 885.0 244.5C892.7 244.5 902.3 244.6 908.0 245.5C913.7 246.4 916.8 247.2 919.0 250.0C921.2 252.8 920.9 257.8 921.0 262.0C921.1 266.2 921.0 271.5 919.5 275.0C918.0 278.5 917.8 281.2 912.0 283.0C906.2 284.8 894.0 286.0 885.0 286.0C876.0 286.0 863.8 284.8 858.0 283.0C852.2 281.2 852.0 278.5 850.5 275.0C849.0 271.5 848.9 266.2 849.0 262.0Z" fill="#5e5e5e" filter="url(#b2)" opacity="0.75" transform="translate(3 2.5)"/></g><g clip-path="url(#cHead)"><path d="M852.5 305.0C852.5 300.3 852.1 294.8 854.0 292.0C855.9 289.2 858.8 288.8 864.0 288.0C869.2 287.2 878.0 287.0 885.0 287.0C892.0 287.0 900.9 287.2 906.0 288.0C911.1 288.8 913.6 289.2 915.5 292.0C917.4 294.8 917.2 300.3 917.2 305.0C917.2 309.7 917.0 315.8 915.5 320.0C914.0 324.2 913.1 327.8 908.0 330.0C902.9 332.2 892.7 333.0 885.0 333.0C877.3 333.0 867.2 332.2 862.0 330.0C856.8 327.8 855.6 324.2 854.0 320.0C852.4 315.8 852.5 309.7 852.5 305.0Z" fill="#5e5e5e" filter="url(#b2)" opacity="0.75" transform="translate(3 2.5)"/></g><g clip-path="url(#cHead)"><path d="M860.6 345.0C860.4 342.2 860.9 338.8 863.0 337.0C865.1 335.2 869.3 335.0 873.0 334.5C876.7 334.0 881.0 334.0 885.0 334.0C889.0 334.0 893.4 334.0 897.0 334.5C900.6 335.0 904.5 335.2 906.5 337.0C908.5 338.8 909.2 342.0 909.0 345.0C908.8 348.0 907.3 351.9 905.0 355.0C902.7 358.1 898.7 361.3 895.0 363.5C891.3 365.7 886.8 368.1 883.0 368.0C879.2 367.9 875.2 365.3 872.0 363.0C868.8 360.7 865.9 357.0 864.0 354.0C862.1 351.0 860.8 347.8 860.6 345.0Z" fill="#5e5e5e" filter="url(#b2)" opacity="0.75" transform="translate(3 2.5)"/></g><clipPath id="cS0"><path d="M849.0 262.0C849.1 257.8 848.8 252.8 851.0 250.0C853.2 247.2 856.3 246.4 862.0 245.5C867.7 244.6 877.3 244.5 885.0 244.5C892.7 244.5 902.3 244.6 908.0 245.5C913.7 246.4 916.8 247.2 919.0 250.0C921.2 252.8 920.9 257.8 921.0 262.0C921.1 266.2 921.0 271.5 919.5 275.0C918.0 278.5 917.8 281.2 912.0 283.0C906.2 284.8 894.0 286.0 885.0 286.0C876.0 286.0 863.8 284.8 858.0 283.0C852.2 281.2 852.0 278.5 850.5 275.0C849.0 271.5 848.9 266.2 849.0 262.0Z"/></clipPath><path d="M849.0 262.0C849.1 257.8 848.8 252.8 851.0 250.0C853.2 247.2 856.3 246.4 862.0 245.5C867.7 244.6 877.3 244.5 885.0 244.5C892.7 244.5 902.3 244.6 908.0 245.5C913.7 246.4 916.8 247.2 919.0 250.0C921.2 252.8 920.9 257.8 921.0 262.0C921.1 266.2 921.0 271.5 919.5 275.0C918.0 278.5 917.8 281.2 912.0 283.0C906.2 284.8 894.0 286.0 885.0 286.0C876.0 286.0 863.8 284.8 858.0 283.0C852.2 281.2 852.0 278.5 850.5 275.0C849.0 271.5 848.9 266.2 849.0 262.0Z" fill="#989898"/><g clip-path="url(#cS0)"><ellipse cx="877.8" cy="256.9" rx="21.6" ry="10.8" fill="#bcbcbc" filter="url(#b4)" opacity="0.95"/><path d="M912.0 240.5 Q919.0 265.2 909.0 290.0 L929.0 290.0 L929.0 240.5Z" fill="#6a6a6a" filter="url(#b4)" opacity="0.95"/><path d="M855.0 240.5 Q850.0 265.2 857.0 290.0 L841.0 290.0 L841.0 240.5Z" fill="#868686" filter="url(#b2)" opacity="0.8"/><path d="M845.0 279.0 Q885.0 285.0 925.0 277.0 L925.0 292.0 L845.0 292.0Z" fill="#6e6e6e" filter="url(#b2)" opacity="0.9"/></g><clipPath id="cS1"><path d="M852.5 305.0C852.5 300.3 852.1 294.8 854.0 292.0C855.9 289.2 858.8 288.8 864.0 288.0C869.2 287.2 878.0 287.0 885.0 287.0C892.0 287.0 900.9 287.2 906.0 288.0C911.1 288.8 913.6 289.2 915.5 292.0C917.4 294.8 917.2 300.3 917.2 305.0C917.2 309.7 917.0 315.8 915.5 320.0C914.0 324.2 913.1 327.8 908.0 330.0C902.9 332.2 892.7 333.0 885.0 333.0C877.3 333.0 867.2 332.2 862.0 330.0C856.8 327.8 855.6 324.2 854.0 320.0C852.4 315.8 852.5 309.7 852.5 305.0Z"/></clipPath><path d="M852.5 305.0C852.5 300.3 852.1 294.8 854.0 292.0C855.9 289.2 858.8 288.8 864.0 288.0C869.2 287.2 878.0 287.0 885.0 287.0C892.0 287.0 900.9 287.2 906.0 288.0C911.1 288.8 913.6 289.2 915.5 292.0C917.4 294.8 917.2 300.3 917.2 305.0C917.2 309.7 917.0 315.8 915.5 320.0C914.0 324.2 913.1 327.8 908.0 330.0C902.9 332.2 892.7 333.0 885.0 333.0C877.3 333.0 867.2 332.2 862.0 330.0C856.8 327.8 855.6 324.2 854.0 320.0C852.4 315.8 852.5 309.7 852.5 305.0Z" fill="#989898"/><g clip-path="url(#cS1)"><ellipse cx="878.4" cy="300.8" rx="19.4" ry="12.0" fill="#bcbcbc" filter="url(#b4)" opacity="0.95"/><path d="M908.2 283.0 Q915.2 310.0 905.2 337.0 L925.2 337.0 L925.2 283.0Z" fill="#6a6a6a" filter="url(#b4)" opacity="0.95"/><path d="M858.5 283.0 Q853.5 310.0 860.5 337.0 L844.5 337.0 L844.5 283.0Z" fill="#868686" filter="url(#b2)" opacity="0.8"/><path d="M848.5 326.0 Q884.9 332.0 921.2 324.0 L921.2 339.0 L848.5 339.0Z" fill="#6e6e6e" filter="url(#b2)" opacity="0.9"/></g><clipPath id="cS2"><path d="M860.6 345.0C860.4 342.2 860.9 338.8 863.0 337.0C865.1 335.2 869.3 335.0 873.0 334.5C876.7 334.0 881.0 334.0 885.0 334.0C889.0 334.0 893.4 334.0 897.0 334.5C900.6 335.0 904.5 335.2 906.5 337.0C908.5 338.8 909.2 342.0 909.0 345.0C908.8 348.0 907.3 351.9 905.0 355.0C902.7 358.1 898.7 361.3 895.0 363.5C891.3 365.7 886.8 368.1 883.0 368.0C879.2 367.9 875.2 365.3 872.0 363.0C868.8 360.7 865.9 357.0 864.0 354.0C862.1 351.0 860.8 347.8 860.6 345.0Z"/></clipPath><path d="M860.6 345.0C860.4 342.2 860.9 338.8 863.0 337.0C865.1 335.2 869.3 335.0 873.0 334.5C876.7 334.0 881.0 334.0 885.0 334.0C889.0 334.0 893.4 334.0 897.0 334.5C900.6 335.0 904.5 335.2 906.5 337.0C908.5 338.8 909.2 342.0 909.0 345.0C908.8 348.0 907.3 351.9 905.0 355.0C902.7 358.1 898.7 361.3 895.0 363.5C891.3 365.7 886.8 368.1 883.0 368.0C879.2 367.9 875.2 365.3 872.0 363.0C868.8 360.7 865.9 357.0 864.0 354.0C862.1 351.0 860.8 347.8 860.6 345.0Z" fill="#989898"/><g clip-path="url(#cS2)"><ellipse cx="880.0" cy="344.2" rx="14.5" ry="8.8" fill="#bcbcbc" filter="url(#b4)" opacity="0.95"/><path d="M900.0 330.0 Q907.0 351.0 897.0 372.0 L917.0 372.0 L917.0 330.0Z" fill="#6a6a6a" filter="url(#b4)" opacity="0.95"/><path d="M866.6 330.0 Q861.6 351.0 868.6 372.0 L852.6 372.0 L852.6 330.0Z" fill="#868686" filter="url(#b2)" opacity="0.8"/><path d="M856.6 361.0 Q884.8 367.0 913.0 359.0 L913.0 374.0 L856.6 374.0Z" fill="#6e6e6e" filter="url(#b2)" opacity="0.9"/></g><path d="M866 286 Q885 290.5 906 285.5" stroke="#585858" stroke-width="2.2" fill="none" filter="url(#b1)" opacity="0.9"/><path d="M868 333 Q885 337 903 332.5" stroke="#5c5c5c" stroke-width="2" fill="none" filter="url(#b1)" opacity="0.9"/><path d="M866 245 Q884 248.5 902 245" stroke="#707070" stroke-width="1.6" fill="none" filter="url(#b1)" opacity="0.8"/><path d="M847.6 252 Q846.5 270 850.3 286 Q850 310 857.4 333 Q860 348 866 357 Q874 368 883 371.4" stroke="#747474" stroke-width="1.3" fill="none" filter="url(#b1)" opacity="0.9"/><path d="M845 252 Q844 270 847.6 287 Q847.4 311 854.8 334 Q857 349 863.4 358.6 Q872 370 882 373.6" stroke="#b8b8b8" stroke-width="1.6" fill="none" filter="url(#b1)" opacity="0.8"/><clipPath id="cEL"><path d="M812.5 368.1C815.3 368.3 818.1 370.1 821.0 372.0C823.9 373.9 827.0 375.4 830.0 379.2C833.0 382.9 836.7 389.1 838.8 394.5C840.9 399.9 842.5 405.6 842.7 411.4C842.9 417.2 842.1 423.7 840.2 429.5C838.3 435.3 834.3 442.3 831.4 446.2C828.5 450.1 825.9 451.2 823.0 453.0C820.1 454.8 816.9 456.7 813.9 456.7C810.9 456.7 807.9 454.8 805.0 453.0C802.1 451.2 799.6 450.2 796.5 446.2C793.4 442.2 788.8 434.8 786.5 429.0C784.2 423.2 782.8 417.6 783.0 411.4C783.2 405.2 785.4 397.8 787.6 392.0C789.9 386.2 793.8 380.0 796.5 376.5C799.2 373.0 801.3 372.4 804.0 371.0C806.7 369.6 809.7 367.9 812.5 368.1Z"/></clipPath><clipPath id="cER"><path d="M955.9 368.1C958.4 368.2 961.1 369.9 963.5 371.5C965.9 373.1 968.0 374.2 970.4 377.4C972.8 380.6 976.2 386.1 978.0 390.8C979.8 395.6 981.1 400.2 981.3 405.9C981.5 411.6 981.0 419.0 979.4 425.0C977.8 431.0 974.5 437.6 971.6 442.0C968.7 446.4 965.3 449.5 962.0 451.5C958.7 453.5 954.7 454.0 951.8 453.9C948.9 453.8 946.7 452.4 944.5 451.0C942.3 449.6 941.1 448.9 938.6 445.7C936.1 442.5 931.7 437.3 929.6 432.0C927.5 426.7 925.8 420.5 926.0 414.1C926.2 407.7 928.4 399.8 931.0 393.5C933.6 387.2 938.5 380.4 941.4 376.6C944.3 372.9 946.1 372.4 948.5 371.0C950.9 369.6 953.4 368.0 955.9 368.1Z"/></clipPath><g clip-path="url(#cHead)"><path d="M812.5 368.1C815.3 368.3 818.1 370.1 821.0 372.0C823.9 373.9 827.0 375.4 830.0 379.2C833.0 382.9 836.7 389.1 838.8 394.5C840.9 399.9 842.5 405.6 842.7 411.4C842.9 417.2 842.1 423.7 840.2 429.5C838.3 435.3 834.3 442.3 831.4 446.2C828.5 450.1 825.9 451.2 823.0 453.0C820.1 454.8 816.9 456.7 813.9 456.7C810.9 456.7 807.9 454.8 805.0 453.0C802.1 451.2 799.6 450.2 796.5 446.2C793.4 442.2 788.8 434.8 786.5 429.0C784.2 423.2 782.8 417.6 783.0 411.4C783.2 405.2 785.4 397.8 787.6 392.0C789.9 386.2 793.8 380.0 796.5 376.5C799.2 373.0 801.3 372.4 804.0 371.0C806.7 369.6 809.7 367.9 812.5 368.1Z" fill="none" stroke="#6c6c6c" stroke-width="6" filter="url(#b2)" opacity="0.85" transform="translate(3 2.5)"/><path d="M796 447 Q814 462 834 444 Q842 432 844 414 L850 420 Q848 446 830 458 Q812 468 794 452Z" fill="#666" filter="url(#b2)" opacity="0.7"/><path d="M936 447 Q952 460 972 444 L976 450 Q954 468 934 452Z" fill="#666" filter="url(#b2)" opacity="0.7"/></g><path d="M812.5 368.1C815.3 368.3 818.1 370.1 821.0 372.0C823.9 373.9 827.0 375.4 830.0 379.2C833.0 382.9 836.7 389.1 838.8 394.5C840.9 399.9 842.5 405.6 842.7 411.4C842.9 417.2 842.1 423.7 840.2 429.5C838.3 435.3 834.3 442.3 831.4 446.2C828.5 450.1 825.9 451.2 823.0 453.0C820.1 454.8 816.9 456.7 813.9 456.7C810.9 456.7 807.9 454.8 805.0 453.0C802.1 451.2 799.6 450.2 796.5 446.2C793.4 442.2 788.8 434.8 786.5 429.0C784.2 423.2 782.8 417.6 783.0 411.4C783.2 405.2 785.4 397.8 787.6 392.0C789.9 386.2 793.8 380.0 796.5 376.5C799.2 373.0 801.3 372.4 804.0 371.0C806.7 369.6 809.7 367.9 812.5 368.1Z" fill="url(#gEyeL)"/><g clip-path="url(#cEL)"><ellipse cx="814" cy="396" rx="18" ry="20" fill="#a8a8a8" filter="url(#b7)" opacity="0.7"/><path d="M780 430 Q800 462 845 440 L845 470 L780 470Z" fill="#808080" filter="url(#b4)" opacity="0.7"/><path d="M836 380 Q848 410 836 445 L850 445 L850 380Z" fill="#848484" filter="url(#b2)" opacity="0.6"/></g><path d="M955.9 368.1C958.4 368.2 961.1 369.9 963.5 371.5C965.9 373.1 968.0 374.2 970.4 377.4C972.8 380.6 976.2 386.1 978.0 390.8C979.8 395.6 981.1 400.2 981.3 405.9C981.5 411.6 981.0 419.0 979.4 425.0C977.8 431.0 974.5 437.6 971.6 442.0C968.7 446.4 965.3 449.5 962.0 451.5C958.7 453.5 954.7 454.0 951.8 453.9C948.9 453.8 946.7 452.4 944.5 451.0C942.3 449.6 941.1 448.9 938.6 445.7C936.1 442.5 931.7 437.3 929.6 432.0C927.5 426.7 925.8 420.5 926.0 414.1C926.2 407.7 928.4 399.8 931.0 393.5C933.6 387.2 938.5 380.4 941.4 376.6C944.3 372.9 946.1 372.4 948.5 371.0C950.9 369.6 953.4 368.0 955.9 368.1Z" fill="url(#gEyeR)"/><g clip-path="url(#cER)"><ellipse cx="948" cy="392" rx="16" ry="18" fill="#a6a6a6" filter="url(#b7)" opacity="0.7"/><path d="M925 435 Q950 462 985 430 L985 470 L925 470Z" fill="#7a7a7a" filter="url(#b4)" opacity="0.75"/><path d="M972 375 Q986 405 974 445 L990 445 L990 375Z" fill="#828282" filter="url(#b2)" opacity="0.6"/></g><circle cx="831.8" cy="412.9" r="10.3" fill="#9e9e9e" stroke="#7a7a7a" stroke-width="1"/><circle cx="831.3" cy="412.4" r="8.6" fill="none" stroke="#b6b6b6" stroke-width="1" opacity="0.8"/><circle cx="835.8" cy="408.4" r="2.4" fill="#b2b2b2" stroke="#808080" stroke-width="0.7"/><circle cx="940.1" cy="414.8" r="10.3" fill="#9e9e9e" stroke="#7a7a7a" stroke-width="1"/><circle cx="939.6" cy="414.3" r="8.6" fill="none" stroke="#b6b6b6" stroke-width="1" opacity="0.8"/><circle cx="944.1" cy="410.3" r="2.4" fill="#b2b2b2" stroke="#808080" stroke-width="0.7"/><circle cx="840.5" cy="353" r="3" fill="#858585" filter="url(#b1)" opacity="0.6"/><circle cx="839.2" cy="351.7" r="2.55" fill="#c6c6c6" filter="url(#b1)"/><circle cx="830.3" cy="475.8" r="2.6" fill="#858585" filter="url(#b1)" opacity="0.6"/><circle cx="829.0" cy="474.5" r="2.21" fill="#c6c6c6" filter="url(#b1)"/><circle cx="915" cy="414.4" r="3.2" fill="#858585" filter="url(#b1)" opacity="0.6"/><circle cx="913.7" cy="413.09999999999997" r="2.72" fill="#c6c6c6" filter="url(#b1)"/><circle cx="839.5" cy="352" r="3.9" fill="none" stroke="#858585" stroke-width="0.9" opacity="0.8"/></svg>
<div class="a" style="left:0;top:0;width:1919px;height:28.5px;background:rgba(48,48,48,0.7);"></div>
</div>
<div class="a" style="left:0px;top:62px;width:1919px;height:931px;border-radius:7px;box-sizing:border-box;border:1px solid rgba(255,255,255,0.11);"></div>
<div class="btn" style="left:325px;top:36px;width:67.75px;height:26.00px;background:#303030;border-radius:5px 5px 0 0;"></div>
<div class="btn" style="left:393.5px;top:36px;width:84.50px;height:26.00px;background:#1b1b1b;border-radius:5px 5px 0 0;"></div>
<div class="btn" style="left:478.6px;top:36px;width:85.20px;height:26.00px;background:#1b1b1b;border-radius:5px 5px 0 0;"></div>
<div class="btn" style="left:564.4px;top:36px;width:90.10px;height:26.00px;background:#1b1b1b;border-radius:5px 5px 0 0;"></div>
<div class="btn" style="left:655.1px;top:36px;width:112.40px;height:26.00px;background:#1b1b1b;border-radius:5px 5px 0 0;"></div>
<div class="btn" style="left:768.1px;top:36px;width:76.40px;height:26.00px;background:#1b1b1b;border-radius:5px 5px 0 0;"></div>
<div class="btn" style="left:845.1px;top:36px;width:88.40px;height:26.00px;background:#1b1b1b;border-radius:5px 5px 0 0;"></div>
<div class="btn" style="left:934.1px;top:36px;width:89.50px;height:26.00px;background:#1b1b1b;border-radius:5px 5px 0 0;"></div>
<div class="btn" style="left:1024.2px;top:36px;width:104.40px;height:26.00px;background:#1b1b1b;border-radius:5px 5px 0 0;"></div>
<div class="btn" style="left:1129.2px;top:36px;width:133.40px;height:26.00px;background:#1b1b1b;border-radius:5px 5px 0 0;"></div>
<div class="btn" style="left:1263.2px;top:36px;width:80.80px;height:26.00px;background:#1b1b1b;border-radius:5px 5px 0 0;"></div>
<div class="btn" style="left:1344.6px;top:36px;width:25.40px;height:26.00px;background:#1b1b1b;border-radius:5px 5px 0 0;"></div>
<div class="btn" style="left:11px;top:66px;width:37.50px;height:23.00px;background:#282828;border-radius:4px;"></div>
<div class="btn" style="left:57.5px;top:66px;width:135.00px;height:23.00px;background:#282828;border-radius:4px;"></div>
<div class="btn" style="left:805.4px;top:66px;width:94.35px;height:23.00px;background:#282828;border-radius:4px;"></div>
<div class="btn" style="left:908px;top:66px;width:37.60px;height:23.00px;background:#282828;border-radius:4px;"></div>
<div class="btn" style="left:954px;top:66px;width:23.25px;height:23.00px;background:#545454;border-radius:4px 0 0 4px;"></div>
<div class="btn" style="left:977.25px;top:66px;width:39.65px;height:23.00px;background:#282828;border-radius:0 4px 4px 0;"></div>
<div class="btn" style="left:1025px;top:66px;width:23.00px;height:23.00px;background:#545454;border-radius:4px 0 0 4px;"></div>
<div class="btn" style="left:1048px;top:66px;width:40.00px;height:23.00px;background:#2c2c2c;border-radius:0 4px 4px 0;"></div>
<div class="btn" style="left:1600px;top:66px;width:38.00px;height:23.00px;background:#282828;border-radius:4px;"></div>
<div class="btn" style="left:1645.6px;top:66px;width:23.40px;height:23.00px;background:#4772b3;border-radius:4px 0 0 4px;"></div>
<div class="btn" style="left:1669px;top:66px;width:25.00px;height:23.00px;background:#282828;border-radius:0 4px 4px 0;"></div>
<div class="btn" style="left:1702px;top:66px;width:23.00px;height:23.00px;background:#4772b3;border-radius:4px 0 0 4px;"></div>
<div class="btn" style="left:1725px;top:66px;width:24.70px;height:23.00px;background:#282828;border-radius:0 4px 4px 0;"></div>
<div class="btn" style="left:1758px;top:66px;width:22.40px;height:23.00px;background:#545454;border-radius:4px;"></div>
<div class="btn" style="left:1788.8px;top:66px;width:24.00px;height:23.00px;background:#545454;border-radius:4px 0 0 4px;"></div>
<div class="btn" style="left:1812.8px;top:66px;width:23.20px;height:23.00px;background:#4772b3;border-radius:0;"></div>
<div class="btn" style="left:1836px;top:66px;width:24.00px;height:23.00px;background:#545454;border-radius:0;"></div>
<div class="btn" style="left:1860px;top:66px;width:24.30px;height:23.00px;background:#545454;border-radius:0;"></div>
<div class="btn" style="left:1884.3px;top:66px;width:24.70px;height:23.00px;background:#282828;border-radius:0 4px 4px 0;"></div>
<div class="btn" style="left:1835.5px;top:66px;width:1.00px;height:23.00px;background:#484848;border-radius:0;"></div>
<div class="btn" style="left:1859.5px;top:66px;width:1.00px;height:23.00px;background:#484848;border-radius:0;"></div>
<div class="btn" style="left:1500px;top:33px;width:40.00px;height:24.50px;background:#282828;border-radius:5px 0 0 5px;border:1px solid #3d3d3d;border-right:none;"></div>
<div class="btn" style="left:1540px;top:33px;width:123.75px;height:24.50px;background:#1d1d1d;border-radius:0;border:1px solid #3d3d3d;border-right:none;"></div>
<div class="btn" style="left:1663.75px;top:33px;width:25.25px;height:24.50px;background:#545454;border-radius:0;"></div>
<div class="btn" style="left:1689px;top:33px;width:25.40px;height:24.50px;background:#333333;border-radius:0 5px 5px 0;"></div>
<div class="btn" style="left:1721px;top:33px;width:39.70px;height:24.50px;background:#282828;border-radius:5px 0 0 5px;border:1px solid #3d3d3d;border-right:none;"></div>
<div class="btn" style="left:1760.7px;top:33px;width:99.30px;height:24.50px;background:#1d1d1d;border-radius:0;border:1px solid #3d3d3d;border-right:none;"></div>
<div class="btn" style="left:1860px;top:33px;width:25.30px;height:24.50px;background:#545454;border-radius:0;"></div>
<div class="btn" style="left:1885.3px;top:33px;width:25.10px;height:24.50px;background:#333333;border-radius:0 5px 5px 0;"></div>
<div class="btn" style="left:0px;top:120.5px;width:10.50px;height:22.00px;background:rgba(40,40,40,0.55);border-radius:0 5px 5px 0;"></div>
<div class="btn" style="left:1907px;top:120.5px;width:13.00px;height:21.50px;background:rgba(40,40,40,0.55);border-radius:5px 0 0 5px;"></div>
<div class="a" style="left:1875.4px;top:208.3px;width:32px;height:32px;border-radius:50%;background:rgba(30,30,30,0.46);"></div>
<div class="a" style="left:1875.4px;top:245.7px;width:32px;height:32px;border-radius:50%;background:rgba(30,30,30,0.46);"></div>
<div class="a" style="left:1875.4px;top:283.3px;width:32px;height:32px;border-radius:50%;background:rgba(30,30,30,0.46);"></div>
<div class="a" style="left:1875.4px;top:320.6px;width:32px;height:32px;border-radius:50%;background:rgba(30,30,30,0.46);"></div>
<svg class="a" style="left:0;top:0" width="1920" height="1020" viewBox="0 0 1920 1020"><defs>
<linearGradient id="hexg" x1="0.1" y1="0.1" x2="0.9" y2="0.9"><stop offset="0" stop-color="#1e96e6"/><stop offset="0.28" stop-color="#00b2b4"/><stop offset="0.5" stop-color="#5cb84e"/><stop offset="0.7" stop-color="#c48a32"/><stop offset="0.88" stop-color="#ee3a28"/><stop offset="1" stop-color="#e0303a"/></linearGradient>
</defs><g stroke="#e87d0d" stroke-linecap="round" fill="none"><path d="M4.26 19.06L12.45 12.22" stroke-width="2.43"/><path d="M6.42 10.69L13.80 10.69" stroke-width="2.07"/><path d="M10.92 7.36L16.05 11.05" stroke-width="2.07"/></g><ellipse cx="14.70" cy="15.10" rx="6.30" ry="5.86" fill="#e87d0d"/><ellipse cx="14.52" cy="15.10" rx="4.03" ry="3.78" fill="#ffffff"/><circle cx="14.61" cy="15.10" r="2.33" fill="#265787"/><g stroke="#e0e0e0" stroke-linecap="round" fill="none"><path d="M14.00 51.40L23.10 43.80" stroke-width="2.70"/><path d="M16.40 42.10L24.60 42.10" stroke-width="2.30"/><path d="M21.40 38.40L27.10 42.50" stroke-width="2.30"/></g><ellipse cx="25.60" cy="47.00" rx="7.00" ry="6.51" fill="#e0e0e0"/><circle cx="25.60" cy="47.00" r="3.92" fill="none" stroke="#181818" stroke-width="1.25"/><path d="M1764.9 13.5H1777.3" stroke="#fff" stroke-width="1.1"/><rect x="1822.8" y="10.6" width="9.4" height="9.2" rx="2" fill="none" stroke="#fff" stroke-width="1.1"/><path d="M1825.6 8.2H1831.6Q1835 8.2 1835 11.6V17.4" fill="none" stroke="#fff" stroke-width="1.1"/><path d="M1881.8 8.1L1894.2 19.9M1894.2 8.1L1881.8 19.9" stroke="#fff" stroke-width="1.15"/><path d="M1351.3 49H1362.6M1357 43.4V54.7" stroke="#989898" stroke-width="1.5"/><g stroke="#e6e6e6" stroke-width="1.3" stroke-linecap="round" fill="none"><path d="M17.8 77.4H24.6M16.4 82.4H33.4M21.5 74.6L19.5 86.6M29.5 79.6L30.6 86.6"/></g><circle cx="29.4" cy="73.5" r="4.4" fill="#e6e6e6"/><path d="M26.9 72.6A2.6 2.6 0 0 1 29.2 70.6" stroke="#282828" stroke-width="0.9" fill="none" stroke-linecap="round"/><path d="M38.2 76.8L41.8 80.6L45.3 76.8" stroke="#e6e6e6" stroke-width="1.5" fill="none" stroke-linecap="round" stroke-linejoin="round"/><g stroke="#8c8c8c" stroke-width="1.5" fill="none" stroke-linecap="round" stroke-linejoin="round"><path d="M62.6 74.4V71.4Q62.6 69.9 64.1 69.9H67.1M74.9 69.9H77.9Q79.4 69.9 79.4 71.4V74.4M79.4 81.9V84.9Q79.4 86.4 77.9 86.4H74.9M67.1 86.4H64.1Q62.6 86.4 62.6 84.9V81.9"/></g><rect x="65.8" y="72.9" width="10.3" height="10.4" rx="1" fill="#e6e6e6"/><path d="M182.0 76.6L185.6 80.6L189.2 76.6" stroke="#e6e6e6" stroke-width="1.5" fill="none" stroke-linecap="round" stroke-linejoin="round"/><path d="M423.1 72.5L429.8 78.1L423.1 83.7" stroke="#fff" stroke-width="1.6" fill="none" stroke-linecap="round" stroke-linejoin="round"/><path d="M445.2 66.9L453.9 71.9V81.8L445.2 86.8L436.5 81.8V71.9Z" fill="url(#hexg)" stroke="url(#hexg)" stroke-width="1.2" stroke-linejoin="round"/><g stroke="#e6e6e6" stroke-width="1.35" fill="none" stroke-linecap="round" stroke-linejoin="round"><circle cx="813.7" cy="83.3" r="2.1"/><path d="M813.6 81.1V69.6M810.2 72.8L813.6 69.4L817 72.8M815.9 83.4H827.6M824.4 80.2L827.8 83.5L824.4 86.8"/></g><g stroke="#a8a8a8" stroke-width="1.2" fill="none" stroke-linecap="round" stroke-linejoin="round"><path d="M815.4 81.6L823.5 73.4M819.6 73.2H823.7V77.6"/></g><path d="M889.3 76.6L893.0 80.6L896.6 76.6" stroke="#e6e6e6" stroke-width="1.5" fill="none" stroke-linecap="round" stroke-linejoin="round"/><path d="M920.22 74.35A5.2 5.2 0 1 1 926.30 79.92" stroke="#e6e6e6" stroke-width="1.3" fill="none" stroke-linecap="round"/><path d="M924.08 81.35A5.2 5.2 0 1 1 918.00 75.78" stroke="#e6e6e6" stroke-width="1.3" fill="none" stroke-linecap="round"/><circle cx="922.6" cy="77.4" r="1.9" fill="#e6e6e6"/><path d="M935.0 76.6L938.7 80.6L942.4 76.6" stroke="#e6e6e6" stroke-width="1.5" fill="none" stroke-linecap="round" stroke-linejoin="round"/><path transform="translate(966.8 76.0) rotate(45)" d="M-6.75 6.6V0A6.75 6.75 0 0 1 6.75 0V6.6H3.8499999999999996V0A3.8499999999999996 3.8499999999999996 0 0 0 -3.8499999999999996 0V6.6Z" stroke="#c4c4c4" stroke-width="1.15" fill="none" stroke-linejoin="round"/><rect x="993.9" y="69.1" width="5.1" height="4.9" rx="0.6" fill="#e6e6e6"/><g stroke="#bdbdbd" fill="none"><path d="M981.8 77V85.5M996.9 77V85.5" stroke-width="1.6"/><path d="M989.4 77V85.5" stroke-width="1.1"/><path d="M981.8 81.2H996.9" stroke-width="1.2"/><path d="M985.6 79.4V83M993.2 79.4V83" stroke-width="1.2"/></g><path d="M1006.1 76.6L1009.8 80.8L1013.4 76.6" stroke="#e6e6e6" stroke-width="1.5" fill="none" stroke-linecap="round" stroke-linejoin="round"/><circle cx="1035.9" cy="78" r="8.2" fill="none" stroke="#8e8e8e" stroke-width="1.1"/><circle cx="1035.9" cy="78" r="2.5" fill="#ffffff"/><path d="M1054.3 83.2C1054.3 69 1071.5 69 1071.5 83.2" stroke="#555555" stroke-width="1.4" fill="none" stroke-linecap="round"/><path d="M1076.7 76.6L1080.3 80.6L1084.0 76.6" stroke="#505050" stroke-width="1.5" fill="none" stroke-linecap="round" stroke-linejoin="round"/><path d="M1511.8 37.1L1516.2 44.3Q1513.4 46.5 1513 51.9Q1509 52.6 1506 50.2Z" fill="#e6e6e6"/><circle cx="1521.2" cy="39.6" r="2.7" fill="#e6e6e6"/><circle cx="1518.9" cy="49.9" r="4.6" fill="#232323" stroke="#e6e6e6" stroke-width="1.2"/><path d="M1516.3 49A2.8 2.8 0 0 1 1518.4 47" stroke="#8a8a8a" stroke-width="1" fill="none" stroke-linecap="round"/><path d="M1528.0 44.7L1531.7 49.0L1535.4 44.7" stroke="#e6e6e6" stroke-width="1.5" fill="none" stroke-linecap="round" stroke-linejoin="round"/><g transform="translate(1649.1 47.8) rotate(45)" stroke="#8a8a8a" stroke-width="1.25" fill="none" stroke-linejoin="round" stroke-linecap="round"><path d="M-5.3 0H5.3Q4.6 -3 2.3 -4.2V-8.6L3.4 -11.3H-3.4L-2.3 -8.6V-4.2Q-4.6 -3 -5.3 0Z"/><path d="M0 0.4V8.2"/></g><g transform="translate(1667.6 36.8)" stroke="#dcdcdc" stroke-width="1.5" fill="none" stroke-linejoin="round" stroke-linecap="round"><path d="M4.6 4.7H1.6Q0.7 4.7 0.7 5.6V16.4Q0.7 17.3 1.6 17.3H12.6Q13.5 17.3 13.5 16.4V14.9"/><path d="M13.2 0.7H6.4Q5.5 0.7 5.5 1.6V11.6Q5.5 12.5 6.4 12.5H16.9Q17.8 12.5 17.8 11.6V5.3"/><path d="M13.2 0.7L17.8 5.3H13.2Z" fill="#dcdcdc"/></g><g transform="translate(1863.6 36.8)" stroke="#dcdcdc" stroke-width="1.5" fill="none" stroke-linejoin="round" stroke-linecap="round"><path d="M4.6 4.7H1.6Q0.7 4.7 0.7 5.6V16.4Q0.7 17.3 1.6 17.3H12.6Q13.5 17.3 13.5 16.4V14.9"/><path d="M13.2 0.7H6.4Q5.5 0.7 5.5 1.6V11.6Q5.5 12.5 6.4 12.5H16.9Q17.8 12.5 17.8 11.6V5.3"/><path d="M13.2 0.7L17.8 5.3H13.2Z" fill="#dcdcdc"/></g><path d="M1697.6000000000001 40.800000000000004L1707.2 50.4M1707.2 40.800000000000004L1697.6000000000001 50.4" stroke="#585858" stroke-width="1.3" fill="none" stroke-linecap="round"/><path d="M1893.4 40.800000000000004L1903.0 50.4M1903.0 40.800000000000004L1893.4 50.4" stroke="#585858" stroke-width="1.3" fill="none" stroke-linecap="round"/><path d="M1727.6 42.7V53.5Q1727.6 54.4 1728.5 54.4H1739.7" stroke="#a2a2a2" stroke-width="1.3" fill="none" stroke-linecap="round"/><path d="M1730.3 40.4V50.8Q1730.3 51.7 1731.2 51.7H1741.9" stroke="#b4b4b4" stroke-width="1.3" fill="none" stroke-linecap="round"/><rect x="1732.8" y="37.7" width="11.5" height="11.5" rx="1.6" fill="#1c1c1c" stroke="#cfcfcf" stroke-width="1.4"/><path d="M1733.4 48.6L1736.9 41.4L1740.4 47.2L1741.6 48.6Z" fill="#e6e6e6"/><circle cx="1741" cy="40.9" r="1.05" fill="#fff"/><path d="M1748.9 44.7L1752.6 49.0L1756.3 44.7" stroke="#e6e6e6" stroke-width="1.5" fill="none" stroke-linecap="round" stroke-linejoin="round"/><path d="M1605.6 73.7Q1612.9 64.3 1620.4 73.7Q1612.9 83 1605.6 73.7Z" fill="#e6e6e6"/><circle cx="1612.9" cy="73.6" r="2.7" fill="#e6e6e6" stroke="#282828" stroke-width="1.1"/><path d="M1601.7 77L1612.2 80.9L1608.4 82.9L1606.2 87Z" fill="#e6e6e6" stroke="#282828" stroke-width="0.8" paint-order="stroke"/><path d="M1627.3 76.5L1630.9 80.5L1634.6 76.5" stroke="#e6e6e6" stroke-width="1.5" fill="none" stroke-linecap="round" stroke-linejoin="round"/><g stroke="#f4f8ff" stroke-width="1.35" fill="none" stroke-linecap="round" stroke-linejoin="round"><path d="M1648.6 72.6A14.2 14.2 0 0 1 1662.7 86.7"/><circle cx="1650.5" cy="84" r="2.1"/><path d="M1652.1 82.4L1656.3 78.3M1659.3 75.4L1665.2 69.8M1660.4 69.6H1665.5V74.7"/></g><path d="M1677.8 76.5L1681.8 80.5L1685.8 76.5" stroke="#e6e6e6" stroke-width="1.5" fill="none" stroke-linecap="round" stroke-linejoin="round"/><circle cx="1716" cy="75" r="6.1" fill="#ffffff"/><path d="M1716.84 79.96A6.0 6.0 0 1 1 1706.89 76.34" stroke="#f0f6ff" stroke-width="1.5" fill="none" stroke-linecap="round"/><path d="M1711.6 74.6L1712.3 75.1M1714.6 76.6L1715.6 77.4M1717 79.6L1717.4 80.4" stroke="#4772b3" stroke-width="0.9" stroke-linecap="round" opacity="0.85"/><path d="M1733.8 76.5L1737.8 80.5L1741.7 76.5" stroke="#e6e6e6" stroke-width="1.5" fill="none" stroke-linecap="round" stroke-linejoin="round"/><path d="M1766 69.9H1775.6Q1777.2 69.9 1777.2 71.5V80.2Q1777.2 81.4 1775.8 81.4" stroke="#a4a4a4" stroke-width="1.4" fill="none" stroke-linecap="round"/><rect x="1760.9" y="74" width="12.2" height="12" rx="1" fill="none" stroke="#e0e0e0" stroke-width="1.4"/><path d="M1765.6 76.4V77.6M1765.8 79.6Q1766 81 1767.6 81.4M1769.6 81.5H1771" stroke="#a8a8a8" stroke-width="1.2" fill="none" stroke-linecap="round"/><g stroke="#c4c4c4" stroke-width="1.25" fill="none"><circle cx="1800.1" cy="77.9" r="8.4"/><path d="M1799.4 69.6V86.2M1792.6 74.4H1807.6M1792.6 81.6H1807.6"/></g><circle cx="1824" cy="77.9" r="8.6" fill="#e2e6f6" stroke="#f4f7ff" stroke-width="0.9"/><circle cx="1848.3" cy="77.9" r="8.4" fill="none" stroke="#c8c8c8" stroke-width="1.25"/><path d="M1848.3 77.9V69.9A8 8 0 0 0 1840.7 80.4Q1844.6 79.4 1848.3 77.9Z" fill="#d2d2d2"/><path d="M1840.7 80.4Q1844.6 79.4 1848.3 77.9L1853.6 84" stroke="#c8c8c8" stroke-width="1" fill="none"/><path d="M1851.4 85.2L1855.6 81M1853.4 85.6L1856.4 82.6M1849.6 85.6L1854.2 81" stroke="#d0d0d0" stroke-width="0.8"/><circle cx="1871.8" cy="77.9" r="8.4" fill="none" stroke="#c8c8c8" stroke-width="1.25"/><path d="M1866.7 76.4A5.8 5.8 0 0 1 1871.2 72.2" stroke="#d0d0d0" stroke-width="2" fill="none" stroke-linecap="round"/><path d="M1874.6 85L1878.8 80.8M1876.8 85L1879.6 82.2M1872.6 85.4L1877.2 80.8" stroke="#c8c8c8" stroke-width="0.8"/><path d="M1893.0 77.0L1896.8 80.6L1900.7 77.0" stroke="#ffffff" stroke-width="1.9" fill="none" stroke-linecap="round" stroke-linejoin="round"/><path d="M2.4 128.3L7.2 132.2L2.4 136.1" stroke="#8c8c8c" stroke-width="1.6" fill="none" stroke-linecap="round" stroke-linejoin="round"/><path d="M1916 126.6L1911.2 131.4L1916 136.2" stroke="#c8c8c8" stroke-width="1.4" fill="none" stroke-linecap="round" stroke-linejoin="round"/><path d="M1857.2 116V196.3" stroke="#3b83d6" stroke-width="2.1"/><path d="M1817 155.9H1897" stroke="#d8405a" stroke-width="2.1"/><circle cx="1817" cy="155.9" r="9.3" fill="#8a3a48" stroke="#d8405a" stroke-width="1.5"/><circle cx="1857.2" cy="196.3" r="9.3" fill="#3a5c8c" stroke="#3b83d6" stroke-width="1.5"/><circle cx="1857.2" cy="116" r="10" fill="#3b83d6"/><circle cx="1897" cy="155.9" r="10" fill="#e0405a"/><circle cx="1857.2" cy="155.9" r="10.4" fill="#88d014" stroke="#b2e862" stroke-width="1.3"/><text x="1857.3" y="120.6" font-family="Liberation Sans, sans-serif" font-size="13.5" font-weight="400" fill="#0a2148" text-anchor="middle" stroke="#0a2148" stroke-width="0.35">Z</text><text x="1897.2" y="160.6" font-family="Liberation Sans, sans-serif" font-size="13.5" fill="#52000e" text-anchor="middle" stroke="#52000e" stroke-width="0.35">X</text><text x="1857.2" y="160.6" font-family="Liberation Sans, sans-serif" font-size="13.5" fill="#1c4400" text-anchor="middle" stroke="#1c4400" stroke-width="0.35" letter-spacing="0.8">-Y</text><circle cx="1893.8" cy="222.5" r="8.4" fill="#d9d9d9"/><path d="M1887.6 228.8L1882.2 233.8" stroke="#d9d9d9" stroke-width="2.6" stroke-linecap="round"/><path d="M1889.6 222.5H1898M1893.8 218.3V226.7" stroke="#2c2c2c" stroke-width="1.25"/><g fill="#d9d9d9" stroke="#d9d9d9" stroke-linecap="round" stroke-linejoin="round"><path d="M1887.6 254V263" stroke-width="2.5" fill="none"/><path d="M1892.5 252.6V262" stroke-width="2.6" fill="none"/><path d="M1897.5 254V263" stroke-width="2.5" fill="none"/><path d="M1901 259.2L1898.6 266" stroke-width="2.3" fill="none"/><path d="M1882.2 262.6L1887 266.6" stroke-width="2.6" fill="none"/><path d="M1886.2 261.6H1899.6Q1899.4 271.4 1892.4 271.4Q1888.4 271.4 1884.6 266Z" stroke-width="1"/></g><g stroke="#d9d9d9" stroke-width="1.5" fill="none" stroke-linejoin="round" stroke-linecap="round"><path d="M1885.3 292.4A3.9 3.9 0 1 0 1885.3 300.2H1895.2A5.4 5.4 0 1 0 1889.6 293.4Q1887.8 292.3 1885.3 292.4Z"/><rect x="1887.2" y="302.9" width="8.2" height="6.2" rx="1.4"/><path d="M1901.7 303.8V309.1L1897 306.4Z"/><path d="M1884.3 304.4V307.6" stroke-width="1.7"/></g><circle cx="1885.5" cy="296.4" r="1.2" fill="#d9d9d9"/><circle cx="1894.8" cy="295" r="1.9" fill="none" stroke="#d9d9d9" stroke-width="1.1"/><path d="M1882.1 327.2H1901.3V346H1882.1ZM1888.5 327.2V346M1882.1 333.5H1901.3M1894.9 327.2V346M1882.1 339.7H1901.3" stroke="#d9d9d9" stroke-width="1.8" fill="none" stroke-linejoin="round"/><path d="M34.56 551.00A12.3 12.3 0 0 1 34.56 555.80" stroke="#ffffff" stroke-width="1.8" fill="none"/><path d="M34.56 555.80A12.3 12.3 0 0 1 32.73 560.23" stroke="#d43232" stroke-width="1.8" fill="none"/><path d="M32.73 560.23A12.3 12.3 0 0 1 29.33 563.63" stroke="#ffffff" stroke-width="1.8" fill="none"/><path d="M29.33 563.63A12.3 12.3 0 0 1 24.90 565.46" stroke="#d43232" stroke-width="1.8" fill="none"/><path d="M24.90 565.46A12.3 12.3 0 0 1 20.10 565.46" stroke="#ffffff" stroke-width="1.8" fill="none"/><path d="M20.10 565.46A12.3 12.3 0 0 1 15.67 563.63" stroke="#d43232" stroke-width="1.8" fill="none"/><path d="M15.67 563.63A12.3 12.3 0 0 1 12.27 560.23" stroke="#ffffff" stroke-width="1.8" fill="none"/><path d="M12.27 560.23A12.3 12.3 0 0 1 10.44 555.80" stroke="#d43232" stroke-width="1.8" fill="none"/><path d="M10.44 555.80A12.3 12.3 0 0 1 10.44 551.00" stroke="#ffffff" stroke-width="1.8" fill="none"/><path d="M10.44 551.00A12.3 12.3 0 0 1 12.27 546.57" stroke="#d43232" stroke-width="1.8" fill="none"/><path d="M12.27 546.57A12.3 12.3 0 0 1 15.67 543.17" stroke="#ffffff" stroke-width="1.8" fill="none"/><path d="M15.67 543.17A12.3 12.3 0 0 1 20.10 541.34" stroke="#d43232" stroke-width="1.8" fill="none"/><path d="M20.10 541.34A12.3 12.3 0 0 1 24.90 541.34" stroke="#ffffff" stroke-width="1.8" fill="none"/><path d="M24.90 541.34A12.3 12.3 0 0 1 29.33 543.17" stroke="#d43232" stroke-width="1.8" fill="none"/><path d="M29.33 543.17A12.3 12.3 0 0 1 32.73 546.57" stroke="#ffffff" stroke-width="1.8" fill="none"/><path d="M32.73 546.57A12.3 12.3 0 0 1 34.56 551.00" stroke="#d43232" stroke-width="1.8" fill="none"/><path d="M22.5 528V546.4M22.5 560V577.6M1 553.4H15.8M29.5 553.4H48" stroke="#000" stroke-width="1.3"/><rect x="12.3" y="995.6" width="15.2" height="19.8" rx="4.2" fill="none" stroke="#8c8c8c" stroke-width="1.3"/><path d="M11.700000000000001 1005.4V999.6Q11.700000000000001 995.0 16.3 995.0H19.1V1005.4Z" fill="#8c8c8c"/><rect x="84.4" y="995.6" width="15.2" height="19.8" rx="4.2" fill="none" stroke="#8c8c8c" stroke-width="1.3"/><rect x="89.4" y="998.2" width="5.2" height="8.6" rx="1.2" fill="#8c8c8c"/><rect x="192.2" y="995.6" width="15.2" height="19.8" rx="4.2" fill="none" stroke="#8c8c8c" stroke-width="1.3"/><path d="M207.99999999999997 1005.4V999.6Q207.99999999999997 995.0 203.39999999999998 995.0H200.59999999999997V1005.4Z" fill="#8c8c8c"/></svg>
<div class="t" style="left:28.51px;top:4.87px;font-size:14.8px;color:#ffffff;transform:scaleX(0.9893);">* 20336_autosave [C:\Users\heros\AppData\Local\Temp\20336_autosave.blend] - Blender 4.5.1 LTS</div>
<div class="t" style="left:44.0px;top:35.01px;font-size:14.4px;color:#e0e0e0;transform:scaleX(1.0006);-webkit-text-stroke:0.15px #e0e0e0;">File</div>
<div class="t" style="left:85.54px;top:35.01px;font-size:14.4px;color:#e0e0e0;transform:scaleX(0.9583);-webkit-text-stroke:0.15px #e0e0e0;">Edit</div>
<div class="t" style="left:128.42px;top:35.01px;font-size:14.4px;color:#e0e0e0;transform:scaleX(0.9783);-webkit-text-stroke:0.15px #e0e0e0;">Render</div>
<div class="t" style="left:194.4px;top:35.01px;font-size:14.4px;color:#e0e0e0;transform:scaleX(1.0039);-webkit-text-stroke:0.15px #e0e0e0;">Window</div>
<div class="t" style="left:264.55px;top:35.01px;font-size:14.4px;color:#e0e0e0;transform:scaleX(1.05);-webkit-text-stroke:0.15px #e0e0e0;">Help</div>
<div class="t" style="left:335.2px;top:37.51px;font-size:14.4px;color:#ffffff;transform:scaleX(1.0476);-webkit-text-stroke:0.15px #ffffff;">Layout</div>
<div class="t" style="left:405.22px;top:37.51px;font-size:14.4px;color:#989898;transform:scaleX(1.0307);-webkit-text-stroke:0.15px #989898;">Modeling</div>
<div class="t" style="left:489.55px;top:37.51px;font-size:14.4px;color:#989898;transform:scaleX(1.0457);-webkit-text-stroke:0.15px #989898;">Sculpting</div>
<div class="t" style="left:575.5px;top:37.51px;font-size:14.4px;color:#989898;transform:scaleX(0.9962);-webkit-text-stroke:0.15px #989898;">UV Editing</div>
<div class="t" style="left:666.9px;top:37.51px;font-size:14.4px;color:#989898;transform:scaleX(1.0417);-webkit-text-stroke:0.15px #989898;">Texture Paint</div>
<div class="t" style="left:779.59px;top:37.51px;font-size:14.4px;color:#989898;transform:scaleX(1.0059);-webkit-text-stroke:0.15px #989898;">Shading</div>
<div class="t" style="left:857.5px;top:37.51px;font-size:14.4px;color:#989898;transform:scaleX(1.0016);-webkit-text-stroke:0.15px #989898;">Animation</div>
<div class="t" style="left:945.25px;top:37.51px;font-size:14.4px;color:#989898;transform:scaleX(1.0006);-webkit-text-stroke:0.15px #989898;">Rendering</div>
<div class="t" style="left:1035.22px;top:37.51px;font-size:14.4px;color:#989898;transform:scaleX(1.0256);-webkit-text-stroke:0.15px #989898;">Compositing</div>
<div class="t" style="left:1140.23px;top:37.51px;font-size:14.4px;color:#989898;transform:scaleX(1.0164);-webkit-text-stroke:0.15px #989898;">Geometry Nodes</div>
<div class="t" style="left:1273.95px;top:37.51px;font-size:14.4px;color:#989898;transform:scaleX(1.0537);-webkit-text-stroke:0.15px #989898;">Scripting</div>
<div class="t" style="left:88.37px;top:67.01px;font-size:14.4px;color:#e0e0e0;transform:scaleX(1.0312);-webkit-text-stroke:0.15px #e0e0e0;">Object Mode</div>
<div class="t" style="left:209.4px;top:67.01px;font-size:14.4px;color:#e0e0e0;transform:scaleX(0.9871);-webkit-text-stroke:0.15px #e0e0e0;">View</div>
<div class="t" style="left:258.34px;top:67.01px;font-size:14.4px;color:#e0e0e0;transform:scaleX(1.0564);-webkit-text-stroke:0.15px #e0e0e0;">Select</div>
<div class="t" style="left:320.4px;top:67.01px;font-size:14.4px;color:#e0e0e0;transform:scaleX(0.974);-webkit-text-stroke:0.15px #e0e0e0;">Add</div>
<div class="t" style="left:363.38px;top:67.01px;font-size:14.4px;color:#e0e0e0;transform:scaleX(1.0207);-webkit-text-stroke:0.15px #e0e0e0;">Object</div>
<div class="t" style="left:836.47px;top:67.01px;font-size:14.4px;color:#e0e0e0;transform:scaleX(1.0312);-webkit-text-stroke:0.15px #e0e0e0;">Global</div>
<div class="t" style="left:1548.37px;top:35.01px;font-size:14.4px;color:#e6e6e6;transform:scaleX(1.0346);-webkit-text-stroke:0.15px #e6e6e6;">Scene</div>
<div class="t" style="left:1770.5px;top:35.01px;font-size:14.4px;color:#e6e6e6;transform:scaleX(1.0075);-webkit-text-stroke:0.15px #e6e6e6;">ViewLayer</div>
<div class="t" style="left:11.58px;top:104.01px;font-size:14.4px;color:#ffffff;transform:scaleX(1.0244);-webkit-text-stroke:0.3px #ffffff;text-shadow:0 0 1.5px rgba(0,0,0,.9),0 0 2px rgba(0,0,0,.8),1px 1px 1.5px rgba(0,0,0,.7);">Front Orthographic</div>
<div class="t" style="left:11.54px;top:126.01px;font-size:14.4px;color:#ffffff;transform:scaleX(1.0614);-webkit-text-stroke:0.3px #ffffff;text-shadow:0 0 1.5px rgba(0,0,0,.9),0 0 2px rgba(0,0,0,.8),1px 1px 1.5px rgba(0,0,0,.7);">(5) Collection</div>
<div class="t" style="left:11.76px;top:148.01px;font-size:14.4px;color:#ffffff;transform:scaleX(1.0438);-webkit-text-stroke:0.3px #ffffff;text-shadow:0 0 1.5px rgba(0,0,0,.9),0 0 2px rgba(0,0,0,.8),1px 1px 1.5px rgba(0,0,0,.7);">10 Centimeters</div>
<div class="t" style="left:29.76px;top:995.01px;font-size:14.4px;color:#989898;transform:scaleX(1.0372);-webkit-text-stroke:0.15px #989898;">Select</div>
<div class="t" style="left:101.5px;top:995.01px;font-size:14.4px;color:#989898;transform:scaleX(1.0013);-webkit-text-stroke:0.15px #989898;">Rotate View</div>
<div class="t" style="left:209.37px;top:995.01px;font-size:14.4px;color:#989898;transform:scaleX(1.0333);-webkit-text-stroke:0.15px #989898;">Options</div>
<div class="t" style="left:1869.7px;top:995.01px;font-size:14.4px;color:#989898;transform:scaleX(1.0406);-webkit-text-stroke:0.15px #989898;">4.5.1</div>
</body></html>
